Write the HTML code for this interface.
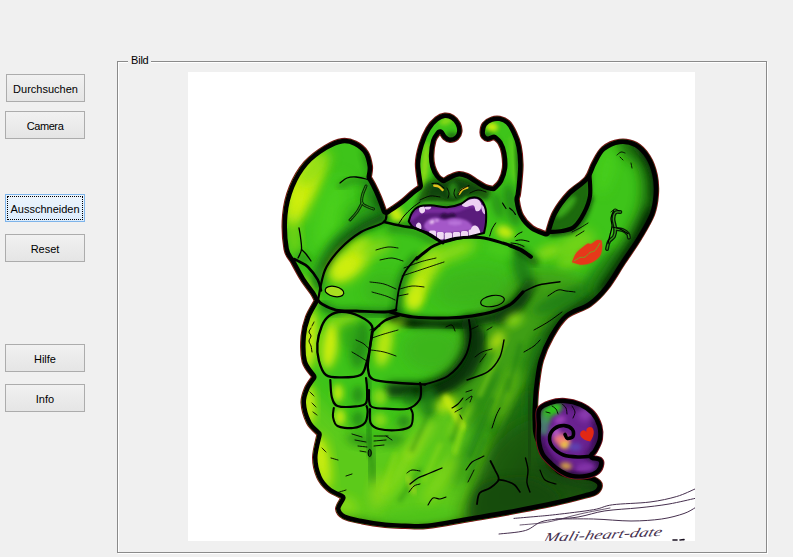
<!DOCTYPE html>
<html><head><meta charset="utf-8">
<style>
html,body{margin:0;padding:0;}
body{width:793px;height:557px;background:#f0f0f0;position:relative;overflow:hidden;font-family:"Liberation Sans",sans-serif;font-size:11px;color:#000;}
.btn{position:absolute;box-sizing:border-box;border:1px solid #acacac;background:linear-gradient(#f1f1f1,#e5e5e5);text-align:center;line-height:26px;padding-top:1px;height:28px;font-size:11px;}
.btn.focus{border-color:#7eb4ea;background:linear-gradient(#ecf4fc,#dcecfc);}
.btn.focus::after{content:"";position:absolute;left:1px;top:1px;right:1px;bottom:1px;border:1px dotted #000;}
.gb{position:absolute;left:117px;top:61px;width:648px;height:490px;border:1px solid #8a8a8a;box-shadow:1px 1px 0 #fff, inset 1px 1px 0 #fff;}
.gbl{position:absolute;left:128px;top:54px;padding:0 2px 0 3px;letter-spacing:-0.2px;background:#f0f0f0;line-height:13px;}
.pic{position:absolute;left:188px;top:72px;width:507px;height:469px;background:#fff;}
svg{position:absolute;left:0;top:0;}
</style></head><body>
<div class="btn" style="left:6px;top:74px;width:79px;">Durchsuchen</div>
<div class="btn" style="left:5px;top:111px;width:80px;letter-spacing:-0.4px;">Camera</div>
<div class="btn focus" style="left:5px;top:194px;width:80px;">Ausschneiden</div>
<div class="btn" style="left:5px;top:234px;width:80px;">Reset</div>
<div class="btn" style="left:5px;top:344px;width:80px;">Hilfe</div>
<div class="btn" style="left:5px;top:384px;width:80px;">Info</div>
<div class="gb"></div>
<div class="gbl">Bild</div>
<div class="pic"></div>
<svg width="793" height="557" viewBox="0 0 793 557">
<defs>
<clipPath id="bodyclip"><path d="M284.4,249.0 C283.0,241.0 282.1,225.5 283.0,215.0 C283.9,204.5 286.4,194.8 290.0,186.0 C293.6,177.2 298.7,168.7 304.5,162.0 C310.3,155.3 318.4,149.8 324.6,146.0 C330.9,142.2 336.8,139.7 342.0,139.0 C347.2,138.3 351.7,139.6 356.0,141.7 C360.3,143.8 365.0,147.6 367.7,151.7 C370.4,155.8 371.4,161.8 372.0,166.0 C372.6,170.2 371.2,175.2 371.0,177.0 C371.7,178.2 373.3,180.7 375.0,184.0 C376.7,187.3 379.2,192.6 381.0,197.0 C382.8,201.4 385.2,208.2 386.0,210.5 C387.2,209.8 390.3,207.8 393.0,206.0 C395.7,204.2 399.0,201.9 402.0,199.5 C405.0,197.1 408.2,193.8 411.0,191.5 C413.8,189.2 417.2,186.9 418.5,186.0 C418.1,182.3 415.7,170.9 415.8,164.0 C415.9,157.1 417.6,150.5 419.4,144.5 C421.2,138.5 423.8,132.5 426.5,128.0 C429.2,123.5 432.5,120.0 435.5,117.6 C438.5,115.2 441.5,113.9 444.5,113.6 C447.5,113.3 450.9,114.2 453.5,115.8 C456.1,117.4 458.5,120.3 459.8,123.0 C461.1,125.7 461.8,129.3 461.5,132.0 C461.2,134.7 459.9,137.3 458.0,139.0 C456.1,140.7 452.3,142.0 449.9,142.0 C447.5,142.0 445.2,140.4 443.6,139.0 C442.0,137.6 440.6,134.6 440.0,133.7 C439.2,134.9 436.6,137.4 435.5,141.0 C434.4,144.6 433.5,150.8 433.4,155.0 C433.2,159.2 433.7,162.7 434.6,166.0 C435.5,169.3 437.5,172.9 439.0,175.0 C440.5,177.1 442.8,178.0 443.6,178.6 C444.7,178.0 447.3,176.1 449.9,175.0 C452.4,173.9 455.9,172.2 458.9,172.0 C461.9,171.8 464.8,172.8 467.8,174.0 C470.8,175.2 473.8,177.7 476.8,179.5 C479.8,181.3 483.1,183.7 485.8,184.9 C488.5,186.1 491.8,186.4 493.0,186.7 C494.0,185.6 497.4,183.2 499.0,180.0 C500.6,176.8 502.3,172.2 502.8,167.8 C503.3,163.4 502.7,157.5 502.0,153.5 C501.3,149.5 499.8,146.0 498.4,143.6 C497.0,141.2 494.6,139.8 493.9,139.0 C492.8,139.3 489.6,141.2 487.6,141.0 C485.7,140.8 483.4,139.5 482.2,138.0 C481.0,136.5 480.3,134.5 480.4,132.0 C480.5,129.5 481.2,125.4 483.0,123.0 C484.8,120.6 488.2,118.6 491.0,117.6 C493.8,116.5 497.0,116.1 500.0,116.7 C503.0,117.3 506.3,118.5 509.0,121.0 C511.7,123.5 514.0,127.8 516.0,132.0 C518.0,136.2 519.7,140.7 520.8,146.0 C521.9,151.3 522.5,158.3 522.6,164.0 C522.8,169.7 522.1,174.9 521.7,180.0 C521.3,185.1 520.5,191.4 520.0,194.8 C519.5,198.2 518.5,197.2 519.0,200.6 C519.5,204.0 520.7,210.7 523.0,215.0 C525.3,219.3 529.2,223.6 533.0,226.4 C536.8,229.2 543.8,231.1 546.0,232.0 C547.2,228.7 549.4,218.7 553.0,212.0 C556.6,205.3 562.4,197.7 567.7,192.0 C573.0,186.3 581.0,182.4 585.0,177.6 C589.0,172.8 589.2,168.0 592.0,163.0 C594.8,158.0 597.4,151.3 602.0,147.4 C606.6,143.5 613.6,140.4 619.4,139.7 C625.2,139.0 631.7,140.3 636.7,143.0 C641.7,145.7 646.2,150.7 649.6,156.0 C653.0,161.3 655.4,168.2 656.8,174.7 C658.2,181.2 658.5,188.1 658.0,194.8 C657.5,201.5 656.8,207.6 654.0,215.0 C651.2,222.4 645.8,231.0 641.0,239.0 C636.2,247.0 630.5,254.7 625.0,263.0 C619.5,271.3 613.7,281.8 608.0,289.0 C602.3,296.2 597.4,301.2 590.7,306.0 C584.0,310.8 574.0,312.3 567.7,317.6 C561.4,322.9 557.1,330.5 553.0,337.7 C548.9,344.9 545.3,353.0 543.0,360.7 C540.7,368.4 539.9,377.1 539.0,383.7 C538.1,390.2 537.8,393.9 537.5,400.0 C537.2,406.1 536.6,413.3 537.0,420.0 C537.4,426.7 536.2,431.7 540.0,440.0 C543.8,448.3 551.7,464.0 560.0,470.0 C568.3,476.0 583.3,474.2 590.0,476.0 C596.7,477.8 598.1,479.0 600.0,481.0 C601.9,483.0 602.2,485.8 601.5,488.0 C600.8,490.2 598.8,492.9 596.0,494.5 C593.2,496.1 591.7,496.1 585.0,497.8 C578.3,499.6 568.0,502.4 556.0,505.0 C544.0,507.6 527.3,510.9 513.0,513.6 C498.7,516.3 484.2,518.6 470.0,521.0 C455.8,523.4 438.8,526.8 428.0,528.0 C417.2,529.2 412.2,528.2 405.0,528.0 C397.8,527.8 392.2,527.8 385.0,527.0 C377.8,526.2 369.0,524.9 362.0,523.5 C355.0,522.1 347.3,520.9 343.0,518.5 C338.7,516.1 336.3,512.4 336.0,509.0 C335.7,505.6 340.2,499.8 341.0,498.0 C338.7,496.8 331.3,494.0 327.4,490.6 C323.4,487.2 319.7,483.2 317.3,477.7 C314.9,472.2 313.0,464.8 313.0,457.6 C313.0,450.4 316.6,438.4 317.3,434.6 C315.6,432.7 309.6,428.3 307.0,423.0 C304.4,417.7 301.8,408.8 301.5,403.0 C301.2,397.2 303.2,392.3 305.0,388.0 C306.8,383.7 310.8,378.8 312.0,377.0 C310.4,374.5 304.4,368.8 302.6,362.0 C300.9,355.2 300.9,343.6 301.5,336.0 C302.1,328.4 303.8,322.5 306.0,316.6 C308.2,310.7 313.1,303.2 314.5,300.5 C313.9,299.4 313.2,297.4 311.0,294.0 C308.8,290.6 304.2,285.2 301.0,280.0 C297.8,274.8 294.3,268.2 291.5,263.0 C288.7,257.8 285.8,257.0 284.4,249.0Z"/></clipPath>
<clipPath id="picclip"><rect x="188" y="72" width="507" height="469"/></clipPath>
<filter id="b1" x="-50%" y="-50%" width="200%" height="200%"><feGaussianBlur stdDeviation="1"/></filter>
<filter id="b2" x="-50%" y="-50%" width="200%" height="200%"><feGaussianBlur stdDeviation="2"/></filter>
<filter id="b3" x="-50%" y="-50%" width="200%" height="200%"><feGaussianBlur stdDeviation="3"/></filter>
<filter id="b4" x="-50%" y="-50%" width="200%" height="200%"><feGaussianBlur stdDeviation="4"/></filter>
<filter id="b6" x="-50%" y="-50%" width="200%" height="200%"><feGaussianBlur stdDeviation="6"/></filter>
<filter id="b8" x="-50%" y="-50%" width="200%" height="200%"><feGaussianBlur stdDeviation="8"/></filter>
<filter id="b12" x="-50%" y="-50%" width="200%" height="200%"><feGaussianBlur stdDeviation="12"/></filter>
</defs>
<g clip-path="url(#picclip)">
<path d="M284.4,249.0 C283.0,241.0 282.1,225.5 283.0,215.0 C283.9,204.5 286.4,194.8 290.0,186.0 C293.6,177.2 298.7,168.7 304.5,162.0 C310.3,155.3 318.4,149.8 324.6,146.0 C330.9,142.2 336.8,139.7 342.0,139.0 C347.2,138.3 351.7,139.6 356.0,141.7 C360.3,143.8 365.0,147.6 367.7,151.7 C370.4,155.8 371.4,161.8 372.0,166.0 C372.6,170.2 371.2,175.2 371.0,177.0 C371.7,178.2 373.3,180.7 375.0,184.0 C376.7,187.3 379.2,192.6 381.0,197.0 C382.8,201.4 385.2,208.2 386.0,210.5 C387.2,209.8 390.3,207.8 393.0,206.0 C395.7,204.2 399.0,201.9 402.0,199.5 C405.0,197.1 408.2,193.8 411.0,191.5 C413.8,189.2 417.2,186.9 418.5,186.0 C418.1,182.3 415.7,170.9 415.8,164.0 C415.9,157.1 417.6,150.5 419.4,144.5 C421.2,138.5 423.8,132.5 426.5,128.0 C429.2,123.5 432.5,120.0 435.5,117.6 C438.5,115.2 441.5,113.9 444.5,113.6 C447.5,113.3 450.9,114.2 453.5,115.8 C456.1,117.4 458.5,120.3 459.8,123.0 C461.1,125.7 461.8,129.3 461.5,132.0 C461.2,134.7 459.9,137.3 458.0,139.0 C456.1,140.7 452.3,142.0 449.9,142.0 C447.5,142.0 445.2,140.4 443.6,139.0 C442.0,137.6 440.6,134.6 440.0,133.7 C439.2,134.9 436.6,137.4 435.5,141.0 C434.4,144.6 433.5,150.8 433.4,155.0 C433.2,159.2 433.7,162.7 434.6,166.0 C435.5,169.3 437.5,172.9 439.0,175.0 C440.5,177.1 442.8,178.0 443.6,178.6 C444.7,178.0 447.3,176.1 449.9,175.0 C452.4,173.9 455.9,172.2 458.9,172.0 C461.9,171.8 464.8,172.8 467.8,174.0 C470.8,175.2 473.8,177.7 476.8,179.5 C479.8,181.3 483.1,183.7 485.8,184.9 C488.5,186.1 491.8,186.4 493.0,186.7 C494.0,185.6 497.4,183.2 499.0,180.0 C500.6,176.8 502.3,172.2 502.8,167.8 C503.3,163.4 502.7,157.5 502.0,153.5 C501.3,149.5 499.8,146.0 498.4,143.6 C497.0,141.2 494.6,139.8 493.9,139.0 C492.8,139.3 489.6,141.2 487.6,141.0 C485.7,140.8 483.4,139.5 482.2,138.0 C481.0,136.5 480.3,134.5 480.4,132.0 C480.5,129.5 481.2,125.4 483.0,123.0 C484.8,120.6 488.2,118.6 491.0,117.6 C493.8,116.5 497.0,116.1 500.0,116.7 C503.0,117.3 506.3,118.5 509.0,121.0 C511.7,123.5 514.0,127.8 516.0,132.0 C518.0,136.2 519.7,140.7 520.8,146.0 C521.9,151.3 522.5,158.3 522.6,164.0 C522.8,169.7 522.1,174.9 521.7,180.0 C521.3,185.1 520.5,191.4 520.0,194.8 C519.5,198.2 518.5,197.2 519.0,200.6 C519.5,204.0 520.7,210.7 523.0,215.0 C525.3,219.3 529.2,223.6 533.0,226.4 C536.8,229.2 543.8,231.1 546.0,232.0 C547.2,228.7 549.4,218.7 553.0,212.0 C556.6,205.3 562.4,197.7 567.7,192.0 C573.0,186.3 581.0,182.4 585.0,177.6 C589.0,172.8 589.2,168.0 592.0,163.0 C594.8,158.0 597.4,151.3 602.0,147.4 C606.6,143.5 613.6,140.4 619.4,139.7 C625.2,139.0 631.7,140.3 636.7,143.0 C641.7,145.7 646.2,150.7 649.6,156.0 C653.0,161.3 655.4,168.2 656.8,174.7 C658.2,181.2 658.5,188.1 658.0,194.8 C657.5,201.5 656.8,207.6 654.0,215.0 C651.2,222.4 645.8,231.0 641.0,239.0 C636.2,247.0 630.5,254.7 625.0,263.0 C619.5,271.3 613.7,281.8 608.0,289.0 C602.3,296.2 597.4,301.2 590.7,306.0 C584.0,310.8 574.0,312.3 567.7,317.6 C561.4,322.9 557.1,330.5 553.0,337.7 C548.9,344.9 545.3,353.0 543.0,360.7 C540.7,368.4 539.9,377.1 539.0,383.7 C538.1,390.2 537.8,393.9 537.5,400.0 C537.2,406.1 536.6,413.3 537.0,420.0 C537.4,426.7 536.2,431.7 540.0,440.0 C543.8,448.3 551.7,464.0 560.0,470.0 C568.3,476.0 583.3,474.2 590.0,476.0 C596.7,477.8 598.1,479.0 600.0,481.0 C601.9,483.0 602.2,485.8 601.5,488.0 C600.8,490.2 598.8,492.9 596.0,494.5 C593.2,496.1 591.7,496.1 585.0,497.8 C578.3,499.6 568.0,502.4 556.0,505.0 C544.0,507.6 527.3,510.9 513.0,513.6 C498.7,516.3 484.2,518.6 470.0,521.0 C455.8,523.4 438.8,526.8 428.0,528.0 C417.2,529.2 412.2,528.2 405.0,528.0 C397.8,527.8 392.2,527.8 385.0,527.0 C377.8,526.2 369.0,524.9 362.0,523.5 C355.0,522.1 347.3,520.9 343.0,518.5 C338.7,516.1 336.3,512.4 336.0,509.0 C335.7,505.6 340.2,499.8 341.0,498.0 C338.7,496.8 331.3,494.0 327.4,490.6 C323.4,487.2 319.7,483.2 317.3,477.7 C314.9,472.2 313.0,464.8 313.0,457.6 C313.0,450.4 316.6,438.4 317.3,434.6 C315.6,432.7 309.6,428.3 307.0,423.0 C304.4,417.7 301.8,408.8 301.5,403.0 C301.2,397.2 303.2,392.3 305.0,388.0 C306.8,383.7 310.8,378.8 312.0,377.0 C310.4,374.5 304.4,368.8 302.6,362.0 C300.9,355.2 300.9,343.6 301.5,336.0 C302.1,328.4 303.8,322.5 306.0,316.6 C308.2,310.7 313.1,303.2 314.5,300.5 C313.9,299.4 313.2,297.4 311.0,294.0 C308.8,290.6 304.2,285.2 301.0,280.0 C297.8,274.8 294.3,268.2 291.5,263.0 C288.7,257.8 285.8,257.0 284.4,249.0Z" fill="none" stroke="#7a1515" stroke-width="2"/>
<g clip-path="url(#bodyclip)">
<path d="M284.4,249.0 C283.0,241.0 282.1,225.5 283.0,215.0 C283.9,204.5 286.4,194.8 290.0,186.0 C293.6,177.2 298.7,168.7 304.5,162.0 C310.3,155.3 318.4,149.8 324.6,146.0 C330.9,142.2 336.8,139.7 342.0,139.0 C347.2,138.3 351.7,139.6 356.0,141.7 C360.3,143.8 365.0,147.6 367.7,151.7 C370.4,155.8 371.4,161.8 372.0,166.0 C372.6,170.2 371.2,175.2 371.0,177.0 C371.7,178.2 373.3,180.7 375.0,184.0 C376.7,187.3 379.2,192.6 381.0,197.0 C382.8,201.4 385.2,208.2 386.0,210.5 C387.2,209.8 390.3,207.8 393.0,206.0 C395.7,204.2 399.0,201.9 402.0,199.5 C405.0,197.1 408.2,193.8 411.0,191.5 C413.8,189.2 417.2,186.9 418.5,186.0 C418.1,182.3 415.7,170.9 415.8,164.0 C415.9,157.1 417.6,150.5 419.4,144.5 C421.2,138.5 423.8,132.5 426.5,128.0 C429.2,123.5 432.5,120.0 435.5,117.6 C438.5,115.2 441.5,113.9 444.5,113.6 C447.5,113.3 450.9,114.2 453.5,115.8 C456.1,117.4 458.5,120.3 459.8,123.0 C461.1,125.7 461.8,129.3 461.5,132.0 C461.2,134.7 459.9,137.3 458.0,139.0 C456.1,140.7 452.3,142.0 449.9,142.0 C447.5,142.0 445.2,140.4 443.6,139.0 C442.0,137.6 440.6,134.6 440.0,133.7 C439.2,134.9 436.6,137.4 435.5,141.0 C434.4,144.6 433.5,150.8 433.4,155.0 C433.2,159.2 433.7,162.7 434.6,166.0 C435.5,169.3 437.5,172.9 439.0,175.0 C440.5,177.1 442.8,178.0 443.6,178.6 C444.7,178.0 447.3,176.1 449.9,175.0 C452.4,173.9 455.9,172.2 458.9,172.0 C461.9,171.8 464.8,172.8 467.8,174.0 C470.8,175.2 473.8,177.7 476.8,179.5 C479.8,181.3 483.1,183.7 485.8,184.9 C488.5,186.1 491.8,186.4 493.0,186.7 C494.0,185.6 497.4,183.2 499.0,180.0 C500.6,176.8 502.3,172.2 502.8,167.8 C503.3,163.4 502.7,157.5 502.0,153.5 C501.3,149.5 499.8,146.0 498.4,143.6 C497.0,141.2 494.6,139.8 493.9,139.0 C492.8,139.3 489.6,141.2 487.6,141.0 C485.7,140.8 483.4,139.5 482.2,138.0 C481.0,136.5 480.3,134.5 480.4,132.0 C480.5,129.5 481.2,125.4 483.0,123.0 C484.8,120.6 488.2,118.6 491.0,117.6 C493.8,116.5 497.0,116.1 500.0,116.7 C503.0,117.3 506.3,118.5 509.0,121.0 C511.7,123.5 514.0,127.8 516.0,132.0 C518.0,136.2 519.7,140.7 520.8,146.0 C521.9,151.3 522.5,158.3 522.6,164.0 C522.8,169.7 522.1,174.9 521.7,180.0 C521.3,185.1 520.5,191.4 520.0,194.8 C519.5,198.2 518.5,197.2 519.0,200.6 C519.5,204.0 520.7,210.7 523.0,215.0 C525.3,219.3 529.2,223.6 533.0,226.4 C536.8,229.2 543.8,231.1 546.0,232.0 C547.2,228.7 549.4,218.7 553.0,212.0 C556.6,205.3 562.4,197.7 567.7,192.0 C573.0,186.3 581.0,182.4 585.0,177.6 C589.0,172.8 589.2,168.0 592.0,163.0 C594.8,158.0 597.4,151.3 602.0,147.4 C606.6,143.5 613.6,140.4 619.4,139.7 C625.2,139.0 631.7,140.3 636.7,143.0 C641.7,145.7 646.2,150.7 649.6,156.0 C653.0,161.3 655.4,168.2 656.8,174.7 C658.2,181.2 658.5,188.1 658.0,194.8 C657.5,201.5 656.8,207.6 654.0,215.0 C651.2,222.4 645.8,231.0 641.0,239.0 C636.2,247.0 630.5,254.7 625.0,263.0 C619.5,271.3 613.7,281.8 608.0,289.0 C602.3,296.2 597.4,301.2 590.7,306.0 C584.0,310.8 574.0,312.3 567.7,317.6 C561.4,322.9 557.1,330.5 553.0,337.7 C548.9,344.9 545.3,353.0 543.0,360.7 C540.7,368.4 539.9,377.1 539.0,383.7 C538.1,390.2 537.8,393.9 537.5,400.0 C537.2,406.1 536.6,413.3 537.0,420.0 C537.4,426.7 536.2,431.7 540.0,440.0 C543.8,448.3 551.7,464.0 560.0,470.0 C568.3,476.0 583.3,474.2 590.0,476.0 C596.7,477.8 598.1,479.0 600.0,481.0 C601.9,483.0 602.2,485.8 601.5,488.0 C600.8,490.2 598.8,492.9 596.0,494.5 C593.2,496.1 591.7,496.1 585.0,497.8 C578.3,499.6 568.0,502.4 556.0,505.0 C544.0,507.6 527.3,510.9 513.0,513.6 C498.7,516.3 484.2,518.6 470.0,521.0 C455.8,523.4 438.8,526.8 428.0,528.0 C417.2,529.2 412.2,528.2 405.0,528.0 C397.8,527.8 392.2,527.8 385.0,527.0 C377.8,526.2 369.0,524.9 362.0,523.5 C355.0,522.1 347.3,520.9 343.0,518.5 C338.7,516.1 336.3,512.4 336.0,509.0 C335.7,505.6 340.2,499.8 341.0,498.0 C338.7,496.8 331.3,494.0 327.4,490.6 C323.4,487.2 319.7,483.2 317.3,477.7 C314.9,472.2 313.0,464.8 313.0,457.6 C313.0,450.4 316.6,438.4 317.3,434.6 C315.6,432.7 309.6,428.3 307.0,423.0 C304.4,417.7 301.8,408.8 301.5,403.0 C301.2,397.2 303.2,392.3 305.0,388.0 C306.8,383.7 310.8,378.8 312.0,377.0 C310.4,374.5 304.4,368.8 302.6,362.0 C300.9,355.2 300.9,343.6 301.5,336.0 C302.1,328.4 303.8,322.5 306.0,316.6 C308.2,310.7 313.1,303.2 314.5,300.5 C313.9,299.4 313.2,297.4 311.0,294.0 C308.8,290.6 304.2,285.2 301.0,280.0 C297.8,274.8 294.3,268.2 291.5,263.0 C288.7,257.8 285.8,257.0 284.4,249.0Z" fill="#3ec41a"/>
<path d="M470.0,320.0 C486.7,298.3 508.3,275.0 530.0,270.0 C551.7,265.0 595.0,280.0 600.0,290.0 C605.0,300.0 569.2,315.0 560.0,330.0 C550.8,345.0 547.5,356.7 545.0,380.0 C542.5,403.3 535.8,451.3 545.0,470.0 C554.2,488.7 612.5,482.8 600.0,492.0 C587.5,501.2 496.7,528.7 470.0,525.0 C443.3,521.3 446.7,490.8 440.0,470.0 C433.3,449.2 425.0,425.0 430.0,400.0 C435.0,375.0 453.3,341.7 470.0,320.0Z" fill="#3f9e18" filter="url(#b8)" opacity="0.95"/>
<path d="M300.0,385.0 C310.8,380.0 348.3,437.5 370.0,440.0 C391.7,442.5 413.3,403.3 430.0,400.0 C446.7,396.7 458.3,408.3 470.0,420.0 C481.7,431.7 498.3,451.7 500.0,470.0 C501.7,488.3 508.3,520.0 480.0,530.0 C451.7,540.0 359.2,540.0 330.0,530.0 C300.8,520.0 310.0,494.2 305.0,470.0 C300.0,445.8 289.2,390.0 300.0,385.0Z" fill="#62cc1c" filter="url(#b8)" opacity="0.85"/>
<path d="M515.0,400.0 C525.0,387.5 539.5,383.3 545.0,395.0 C550.5,406.7 538.0,455.0 548.0,470.0 C558.0,485.0 603.0,478.0 605.0,485.0 C607.0,492.0 579.2,505.8 560.0,512.0 C540.8,518.2 502.5,529.0 490.0,522.0 C477.5,515.0 480.8,490.3 485.0,470.0 C489.2,449.7 505.0,412.5 515.0,400.0Z" fill="#1d6211" filter="url(#b8)" opacity="0.95"/>
<path d="M530.0,450.0 C545.8,446.0 588.0,468.5 600.0,476.0 C612.0,483.5 612.0,489.0 602.0,495.0 C592.0,501.0 556.2,511.2 540.0,512.0 C523.8,512.8 506.7,510.3 505.0,500.0 C503.3,489.7 514.2,454.0 530.0,450.0Z" fill="#143f0c" filter="url(#b4)" opacity="0.95"/>
<path d="M538.0,458.0 C546.3,456.7 564.7,477.7 575.0,482.0 C585.3,486.3 597.5,481.7 600.0,484.0 C602.5,486.3 599.2,492.5 590.0,496.0 C580.8,499.5 555.8,506.0 545.0,505.0 C534.2,504.0 526.2,497.8 525.0,490.0 C523.8,482.2 529.7,459.3 538.0,458.0Z" fill="#0f300a" filter="url(#b3)" opacity="0.9"/>
<path d="M600.0,300.0 C594.7,303.0 575.8,311.7 568.0,318.0 C560.2,324.3 557.2,330.8 553.0,338.0 C548.8,345.2 545.3,353.3 543.0,361.0 C540.7,368.7 539.9,375.8 539.0,384.0 C538.1,392.2 537.7,399.0 537.5,410.0 C537.3,421.0 537.9,443.3 538.0,450.0" fill="none" stroke="#195a10" stroke-width="26" stroke-linecap="round" stroke-linejoin="round" filter="url(#b6)" opacity="0.9"/>
<path d="M612.0,285.0 C604.7,290.5 577.8,309.2 568.0,318.0 C558.2,326.8 557.2,330.8 553.0,338.0 C548.8,345.2 545.3,353.3 543.0,361.0 C540.7,368.7 539.9,375.8 539.0,384.0 C538.1,392.2 537.8,405.7 537.5,410.0" fill="none" stroke="#0b3c09" stroke-width="10" stroke-linecap="round" stroke-linejoin="round" filter="url(#b4)" opacity="0.8"/>
<path d="M345.0,522.0 C351.7,523.2 371.2,527.8 385.0,529.0 C398.8,530.2 413.8,530.2 428.0,529.0 C442.2,527.8 455.8,524.5 470.0,522.0 C484.2,519.5 498.7,516.7 513.0,514.0 C527.3,511.3 543.2,508.8 556.0,506.0 C568.8,503.2 584.3,498.5 590.0,497.0" fill="none" stroke="#1a5a10" stroke-width="10" stroke-linecap="round" stroke-linejoin="round" filter="url(#b4)" opacity="0.8"/>
<ellipse cx="302.0" cy="190.0" rx="13.0" ry="36.0" transform="rotate(18.0 302.0 190.0)" fill="#cdee10" filter="url(#b6)" opacity="1"/>
<ellipse cx="310.0" cy="180.0" rx="10.0" ry="24.0" transform="rotate(25.0 310.0 180.0)" fill="#cdee10" filter="url(#b6)" opacity="0.7"/>
<ellipse cx="297.0" cy="198.0" rx="6.0" ry="26.0" transform="rotate(12.0 297.0 198.0)" fill="#cdee10" filter="url(#b4)" opacity="0.8"/>
<ellipse cx="294.0" cy="235.0" rx="6.0" ry="22.0" transform="rotate(-5.0 294.0 235.0)" fill="#93de18" filter="url(#b6)" opacity="0.7"/>
<ellipse cx="314.0" cy="168.0" rx="10.0" ry="22.0" transform="rotate(42.0 314.0 168.0)" fill="#93de18" filter="url(#b6)" opacity="0.9"/>
<ellipse cx="330.0" cy="215.0" rx="14.0" ry="40.0" transform="rotate(15.0 330.0 215.0)" fill="#4fd61c" filter="url(#b8)" opacity="0.7"/>
<ellipse cx="375.0" cy="198.0" rx="10.0" ry="24.0" transform="rotate(-10.0 375.0 198.0)" fill="#1f7d12" filter="url(#b6)" opacity="0.95"/>
<ellipse cx="381.0" cy="205.0" rx="5.0" ry="12.0" transform="rotate(-15.0 381.0 205.0)" fill="#0b3c09" filter="url(#b3)" opacity="0.6"/>
<ellipse cx="360.0" cy="215.0" rx="16.0" ry="10.0" transform="rotate(-30.0 360.0 215.0)" fill="#2a9816" filter="url(#b6)" opacity="0.7"/>
<path d="M384.0,214.0 C380.3,215.7 369.3,219.5 362.0,224.0 C354.7,228.5 346.2,234.7 340.0,241.0 C333.8,247.3 329.0,254.7 325.0,262.0 C321.0,269.3 317.5,281.2 316.0,285.0" fill="none" stroke="#1f7d12" stroke-width="14" stroke-linecap="round" stroke-linejoin="round" filter="url(#b4)" opacity="0.95"/>
<path d="M384.0,217.0 C380.3,218.8 369.2,223.3 362.0,228.0 C354.8,232.7 346.8,238.7 341.0,245.0 C335.2,251.3 329.3,262.5 327.0,266.0" fill="none" stroke="#0b3c09" stroke-width="6" stroke-linecap="round" stroke-linejoin="round" filter="url(#b3)" opacity="0.8"/>
<ellipse cx="303.0" cy="258.0" rx="8.0" ry="5.0" transform="rotate(30.0 303.0 258.0)" fill="#1f7d12" filter="url(#b3)" opacity="0.6"/>
<path d="M340.0,186.0 C342.7,185.0 350.8,180.3 356.0,180.0 C361.2,179.7 368.5,183.3 371.0,184.0" fill="none" stroke="#1f7d12" stroke-width="6" stroke-linecap="round" stroke-linejoin="round" filter="url(#b3)" opacity="0.6"/>
<ellipse cx="368.0" cy="160.0" rx="5.0" ry="14.0" transform="rotate(-15.0 368.0 160.0)" fill="#1f7d12" filter="url(#b3)" opacity="0.6"/>
<ellipse cx="425.0" cy="165.0" rx="3.5" ry="24.0" transform="rotate(5.0 425.0 165.0)" fill="#93de18" filter="url(#b2)" opacity="0.95"/>
<ellipse cx="446.0" cy="121.0" rx="7.0" ry="3.5" transform="rotate(-20.0 446.0 121.0)" fill="#93de18" filter="url(#b2)" opacity="0.9"/>
<ellipse cx="513.0" cy="160.0" rx="3.5" ry="24.0" transform="rotate(-5.0 513.0 160.0)" fill="#5fd01c" filter="url(#b2)" opacity="0.8"/>
<ellipse cx="492.0" cy="127.0" rx="6.0" ry="4.5" transform="rotate(10.0 492.0 127.0)" fill="#cdee10" filter="url(#b2)" opacity="0.95"/>
<ellipse cx="519.0" cy="165.0" rx="2.5" ry="30.0" transform="rotate(-3.0 519.0 165.0)" fill="#0b3c09" filter="url(#b2)" opacity="0.7"/>
<ellipse cx="437.0" cy="160.0" rx="3.0" ry="22.0" transform="rotate(3.0 437.0 160.0)" fill="#17560e" filter="url(#b2)" opacity="0.8"/>
<ellipse cx="499.0" cy="160.0" rx="3.0" ry="22.0" transform="rotate(-3.0 499.0 160.0)" fill="#17560e" filter="url(#b2)" opacity="0.8"/>
<ellipse cx="452.0" cy="136.0" rx="6.0" ry="4.0" transform="rotate(0.0 452.0 136.0)" fill="#17560e" filter="url(#b2)" opacity="0.7"/>
<ellipse cx="487.0" cy="136.0" rx="6.0" ry="4.0" transform="rotate(0.0 487.0 136.0)" fill="#17560e" filter="url(#b2)" opacity="0.6"/>
<ellipse cx="455.0" cy="188.0" rx="32.0" ry="10.0" transform="rotate(0.0 455.0 188.0)" fill="#1a6a10" filter="url(#b4)" opacity="0.95"/>
<ellipse cx="396.0" cy="214.0" rx="6.0" ry="10.0" transform="rotate(-35.0 396.0 214.0)" fill="#cdee10" filter="url(#b3)" opacity="1"/>
<ellipse cx="505.0" cy="232.0" rx="9.0" ry="6.0" transform="rotate(20.0 505.0 232.0)" fill="#cdee10" filter="url(#b3)" opacity="0.95"/>
<ellipse cx="512.0" cy="205.0" rx="7.0" ry="22.0" transform="rotate(-15.0 512.0 205.0)" fill="#1f7d12" filter="url(#b4)" opacity="0.8"/>
<ellipse cx="404.0" cy="224.0" rx="14.0" ry="3.0" transform="rotate(-5.0 404.0 224.0)" fill="#1f7d12" filter="url(#b2)" opacity="0.6"/>
<ellipse cx="497.0" cy="205.0" rx="5.0" ry="14.0" transform="rotate(-15.0 497.0 205.0)" fill="#1f7d12" filter="url(#b3)" opacity="0.6"/>
<ellipse cx="349.0" cy="264.0" rx="24.0" ry="13.0" transform="rotate(-40.0 349.0 264.0)" fill="#cdee10" filter="url(#b6)" opacity="1"/>
<ellipse cx="345.0" cy="268.0" rx="14.0" ry="7.0" transform="rotate(-40.0 345.0 268.0)" fill="#cdee10" filter="url(#b4)" opacity="0.8"/>
<ellipse cx="360.0" cy="245.0" rx="12.0" ry="5.0" transform="rotate(-30.0 360.0 245.0)" fill="#cdee10" filter="url(#b4)" opacity="0.7"/>
<ellipse cx="306.0" cy="284.0" rx="5.0" ry="10.0" transform="rotate(-35.0 306.0 284.0)" fill="#93de18" filter="url(#b3)" opacity="0.8"/>
<ellipse cx="374.0" cy="248.0" rx="18.0" ry="8.0" transform="rotate(-20.0 374.0 248.0)" fill="#93de18" filter="url(#b6)" opacity="0.8"/>
<ellipse cx="385.0" cy="290.0" rx="20.0" ry="16.0" transform="rotate(0.0 385.0 290.0)" fill="#3ab01a" filter="url(#b6)" opacity="0.7"/>
<path d="M322.0,305.0 C324.3,306.2 330.3,310.8 336.0,312.0 C341.7,313.2 347.8,311.8 356.0,312.0 C364.2,312.2 378.3,313.2 385.0,313.0 C391.7,312.8 394.2,311.3 396.0,311.0" fill="none" stroke="#1f7d12" stroke-width="9" stroke-linecap="round" stroke-linejoin="round" filter="url(#b3)" opacity="0.85"/>
<path d="M416.0,259.0 C414.2,261.3 407.7,267.8 405.0,273.0 C402.3,278.2 401.3,283.8 400.0,290.0 C398.7,296.2 397.5,306.7 397.0,310.0" fill="none" stroke="#1f7d12" stroke-width="10" stroke-linecap="round" stroke-linejoin="round" filter="url(#b3)" opacity="0.85"/>
<path d="M390.0,229.0 C394.0,229.5 406.3,229.7 414.0,232.0 C421.7,234.3 432.3,241.2 436.0,243.0" fill="none" stroke="#1f7d12" stroke-width="6" stroke-linecap="round" stroke-linejoin="round" filter="url(#b3)" opacity="0.7"/>
<ellipse cx="426.0" cy="272.0" rx="10.0" ry="26.0" transform="rotate(30.0 426.0 272.0)" fill="#cdee10" filter="url(#b6)" opacity="0.85"/>
<ellipse cx="418.0" cy="292.0" rx="7.0" ry="16.0" transform="rotate(18.0 418.0 292.0)" fill="#cdee10" filter="url(#b4)" opacity="0.9"/>
<ellipse cx="452.0" cy="252.0" rx="26.0" ry="8.0" transform="rotate(-22.0 452.0 252.0)" fill="#93de18" filter="url(#b6)" opacity="0.9"/>
<ellipse cx="414.0" cy="299.0" rx="8.0" ry="11.0" transform="rotate(15.0 414.0 299.0)" fill="#cdee10" filter="url(#b4)" opacity="1"/>
<ellipse cx="472.0" cy="288.0" rx="38.0" ry="20.0" transform="rotate(-10.0 472.0 288.0)" fill="#3cb41c" filter="url(#b8)" opacity="0.85"/>
<ellipse cx="522.0" cy="268.0" rx="9.0" ry="22.0" transform="rotate(-15.0 522.0 268.0)" fill="#1f7d12" filter="url(#b4)" opacity="0.9"/>
<ellipse cx="548.0" cy="252.0" rx="12.0" ry="7.0" transform="rotate(-20.0 548.0 252.0)" fill="#93de18" filter="url(#b4)" opacity="0.8"/>
<ellipse cx="500.0" cy="250.0" rx="16.0" ry="6.0" transform="rotate(15.0 500.0 250.0)" fill="#4fd01c" filter="url(#b4)" opacity="0.6"/>
<path d="M392.0,317.0 C395.5,317.8 403.7,320.8 413.0,322.0 C422.3,323.2 438.2,324.2 448.0,324.0 C457.8,323.8 464.0,322.3 472.0,321.0 C480.0,319.7 489.3,318.2 496.0,316.0 C502.7,313.8 507.3,311.5 512.0,308.0 C516.7,304.5 522.0,297.2 524.0,295.0" fill="none" stroke="#0b3c09" stroke-width="11" stroke-linecap="round" stroke-linejoin="round" filter="url(#b3)" opacity="0.95"/>
<path d="M394.0,320.0 C397.2,320.7 404.0,323.0 413.0,324.0 C422.0,325.0 438.5,326.0 448.0,326.0 C457.5,326.0 466.3,324.3 470.0,324.0" fill="none" stroke="#062405" stroke-width="7" stroke-linecap="round" stroke-linejoin="round" filter="url(#b2)" opacity="0.8"/>
<path d="M500.0,319.0 C502.7,317.0 511.0,312.7 516.0,307.0 C521.0,301.3 527.7,288.7 530.0,285.0" fill="none" stroke="#0b3c09" stroke-width="12" stroke-linecap="round" stroke-linejoin="round" filter="url(#b4)" opacity="0.8"/>
<path d="M518.0,250.0 C519.5,251.0 524.2,254.0 527.0,256.0 C529.8,258.0 533.7,261.0 535.0,262.0" fill="none" stroke="#0b3c09" stroke-width="7" stroke-linecap="round" stroke-linejoin="round" filter="url(#b3)" opacity="0.7"/>
<ellipse cx="330.0" cy="345.0" rx="8.0" ry="24.0" transform="rotate(8.0 330.0 345.0)" fill="#cdee10" filter="url(#b4)" opacity="1"/>
<ellipse cx="345.0" cy="321.0" rx="14.0" ry="6.0" transform="rotate(-15.0 345.0 321.0)" fill="#93de18" filter="url(#b4)" opacity="0.9"/>
<ellipse cx="360.0" cy="345.0" rx="9.0" ry="24.0" transform="rotate(8.0 360.0 345.0)" fill="#1f7d12" filter="url(#b4)" opacity="0.75"/>
<ellipse cx="350.0" cy="335.0" rx="10.0" ry="14.0" transform="rotate(0.0 350.0 335.0)" fill="#2fa018" filter="url(#b4)" opacity="0.6"/>
<ellipse cx="384.0" cy="345.0" rx="8.0" ry="22.0" transform="rotate(10.0 384.0 345.0)" fill="#cdee10" filter="url(#b4)" opacity="0.85"/>
<ellipse cx="395.0" cy="325.0" rx="12.0" ry="5.0" transform="rotate(-20.0 395.0 325.0)" fill="#93de18" filter="url(#b4)" opacity="0.8"/>
<ellipse cx="432.0" cy="350.0" rx="28.0" ry="22.0" transform="rotate(0.0 432.0 350.0)" fill="#3eb41c" filter="url(#b6)" opacity="0.85"/>
<path d="M469.0,324.0 C469.5,326.7 472.5,334.0 472.0,340.0 C471.5,346.0 469.7,353.5 466.0,360.0 C462.3,366.5 456.7,374.2 450.0,379.0 C443.3,383.8 435.7,387.2 426.0,389.0 C416.3,390.8 397.7,389.8 392.0,390.0" fill="none" stroke="#0b3c09" stroke-width="15" stroke-linecap="round" stroke-linejoin="round" filter="url(#b4)" opacity="1"/>
<path d="M474.0,330.0 C474.2,333.3 477.0,342.7 475.0,350.0 C473.0,357.3 468.5,367.3 462.0,374.0 C455.5,380.7 444.7,386.7 436.0,390.0 C427.3,393.3 414.3,393.3 410.0,394.0" fill="none" stroke="#062405" stroke-width="10" stroke-linecap="round" stroke-linejoin="round" filter="url(#b3)" opacity="0.9"/>
<path d="M480.0,335.0 C480.0,337.8 482.0,345.2 480.0,352.0 C478.0,358.8 470.0,372.0 468.0,376.0" fill="none" stroke="#0b3c09" stroke-width="8" stroke-linecap="round" stroke-linejoin="round" filter="url(#b3)" opacity="0.7"/>
<path d="M540.0,340.0 C536.7,345.8 526.7,363.3 520.0,375.0 C513.3,386.7 503.3,404.2 500.0,410.0" fill="none" stroke="#1f7d12" stroke-width="9" stroke-linecap="round" stroke-linejoin="round" filter="url(#b4)" opacity="0.6"/>
<path d="M478.0,330.0 C477.7,334.0 479.0,345.7 476.0,354.0 C473.0,362.3 467.7,373.0 460.0,380.0 C452.3,387.0 435.0,393.3 430.0,396.0" fill="none" stroke="#0b3c09" stroke-width="12" stroke-linecap="round" stroke-linejoin="round" filter="url(#b6)" opacity="0.7"/>
<ellipse cx="310.0" cy="340.0" rx="7.0" ry="30.0" transform="rotate(5.0 310.0 340.0)" fill="#cdee10" filter="url(#b4)" opacity="1"/>
<ellipse cx="309.0" cy="405.0" rx="6.0" ry="20.0" transform="rotate(0.0 309.0 405.0)" fill="#cdee10" filter="url(#b4)" opacity="1"/>
<ellipse cx="312.0" cy="300.0" rx="6.0" ry="10.0" transform="rotate(0.0 312.0 300.0)" fill="#93de18" filter="url(#b4)" opacity="0.7"/>
<ellipse cx="338.0" cy="393.0" rx="5.0" ry="9.0" transform="rotate(0.0 338.0 393.0)" fill="#cdee10" filter="url(#b3)" opacity="0.9"/>
<ellipse cx="358.0" cy="395.0" rx="6.0" ry="9.0" transform="rotate(0.0 358.0 395.0)" fill="#1f7d12" filter="url(#b3)" opacity="0.65"/>
<ellipse cx="380.0" cy="397.0" rx="7.0" ry="8.0" transform="rotate(0.0 380.0 397.0)" fill="#93de18" filter="url(#b3)" opacity="0.85"/>
<ellipse cx="410.0" cy="399.0" rx="8.0" ry="8.0" transform="rotate(0.0 410.0 399.0)" fill="#1f7d12" filter="url(#b3)" opacity="0.7"/>
<ellipse cx="340.0" cy="417.0" rx="5.0" ry="8.0" transform="rotate(0.0 340.0 417.0)" fill="#cdee10" filter="url(#b3)" opacity="0.9"/>
<ellipse cx="358.0" cy="419.0" rx="6.0" ry="8.0" transform="rotate(0.0 358.0 419.0)" fill="#1f7d12" filter="url(#b3)" opacity="0.65"/>
<ellipse cx="380.0" cy="420.0" rx="7.0" ry="7.0" transform="rotate(0.0 380.0 420.0)" fill="#93de18" filter="url(#b3)" opacity="0.85"/>
<ellipse cx="404.0" cy="422.0" rx="7.0" ry="7.0" transform="rotate(0.0 404.0 422.0)" fill="#1f7d12" filter="url(#b3)" opacity="0.7"/>
<path d="M368.0,380.0 C368.0,384.2 367.8,396.7 368.0,405.0 C368.2,413.3 368.7,421.7 369.0,430.0 C369.3,438.3 369.8,450.8 370.0,455.0" fill="none" stroke="#1f7d12" stroke-width="5" stroke-linecap="round" stroke-linejoin="round" filter="url(#b2)" opacity="0.7"/>
<ellipse cx="428.0" cy="402.0" rx="10.0" ry="16.0" transform="rotate(0.0 428.0 402.0)" fill="#1f7d12" filter="url(#b4)" opacity="0.8"/>
<path d="M370.0,450.0 C370.3,452.5 371.3,460.0 372.0,465.0 C372.7,470.0 373.7,477.5 374.0,480.0" fill="none" stroke="#1f7d12" stroke-width="8" stroke-linecap="round" stroke-linejoin="round" filter="url(#b4)" opacity="0.75"/>
<ellipse cx="360.0" cy="440.0" rx="14.0" ry="6.0" transform="rotate(10.0 360.0 440.0)" fill="#1f7d12" filter="url(#b4)" opacity="0.6"/>
<ellipse cx="392.0" cy="440.0" rx="14.0" ry="6.0" transform="rotate(-5.0 392.0 440.0)" fill="#1f7d12" filter="url(#b4)" opacity="0.6"/>
<ellipse cx="378.0" cy="492.0" rx="8.0" ry="18.0" transform="rotate(10.0 378.0 492.0)" fill="#a0dc1c" filter="url(#b6)" opacity="0.6"/>
<ellipse cx="514.0" cy="320.0" rx="10.0" ry="6.0" transform="rotate(-30.0 514.0 320.0)" fill="#93de18" filter="url(#b4)" opacity="0.9"/>
<ellipse cx="497.0" cy="341.0" rx="6.0" ry="11.0" transform="rotate(30.0 497.0 341.0)" fill="#cdee10" filter="url(#b4)" opacity="0.8"/>
<ellipse cx="446.0" cy="404.0" rx="11.0" ry="7.0" transform="rotate(-30.0 446.0 404.0)" fill="#cdee10" filter="url(#b4)" opacity="0.8"/>
<ellipse cx="462.0" cy="420.0" rx="6.0" ry="20.0" transform="rotate(35.0 462.0 420.0)" fill="#93de18" filter="url(#b4)" opacity="0.7"/>
<ellipse cx="505.0" cy="395.0" rx="7.0" ry="30.0" transform="rotate(25.0 505.0 395.0)" fill="#93de18" filter="url(#b6)" opacity="0.6"/>
<ellipse cx="560.0" cy="300.0" rx="30.0" ry="8.0" transform="rotate(-25.0 560.0 300.0)" fill="#1f7d12" filter="url(#b4)" opacity="0.8"/>
<ellipse cx="600.0" cy="272.0" rx="30.0" ry="8.0" transform="rotate(-50.0 600.0 272.0)" fill="#1f7d12" filter="url(#b4)" opacity="0.7"/>
<ellipse cx="483.0" cy="400.0" rx="5.0" ry="34.0" transform="rotate(28.0 483.0 400.0)" fill="#1f7d12" filter="url(#b4)" opacity="0.6"/>
<ellipse cx="470.0" cy="450.0" rx="8.0" ry="40.0" transform="rotate(25.0 470.0 450.0)" fill="#1f7d12" filter="url(#b6)" opacity="0.6"/>
<ellipse cx="520.0" cy="420.0" rx="6.0" ry="30.0" transform="rotate(20.0 520.0 420.0)" fill="#1f7d12" filter="url(#b4)" opacity="0.5"/>
<path d="M632.0,142.0 C634.7,144.3 644.2,150.5 648.0,156.0 C651.8,161.5 653.7,168.5 655.0,175.0 C656.3,181.5 656.5,188.3 656.0,195.0 C655.5,201.7 654.7,207.7 652.0,215.0 C649.3,222.3 644.5,231.0 640.0,239.0 C635.5,247.0 630.3,254.7 625.0,263.0 C619.7,271.3 610.8,284.7 608.0,289.0" fill="none" stroke="#1a6a10" stroke-width="30" stroke-linecap="round" stroke-linejoin="round" filter="url(#b6)" opacity="0.9"/>
<path d="M640.0,146.0 C641.8,148.3 648.2,154.7 651.0,160.0 C653.8,165.3 655.8,172.0 657.0,178.0 C658.2,184.0 658.5,189.7 658.0,196.0 C657.5,202.3 656.8,208.7 654.0,216.0 C651.2,223.3 645.8,232.0 641.0,240.0 C636.2,248.0 630.8,255.3 625.0,264.0 C619.2,272.7 609.2,287.3 606.0,292.0" fill="none" stroke="#0b3c09" stroke-width="14" stroke-linecap="round" stroke-linejoin="round" filter="url(#b4)" opacity="0.95"/>
<path d="M652.0,215.0 C650.0,219.5 644.3,233.8 640.0,242.0 C635.7,250.2 631.0,256.3 626.0,264.0 C621.0,271.7 612.7,284.0 610.0,288.0" fill="none" stroke="#062405" stroke-width="14" stroke-linecap="round" stroke-linejoin="round" filter="url(#b4)" opacity="0.85"/>
<path d="M645.0,150.0 C646.7,153.7 653.0,164.3 655.0,172.0 C657.0,179.7 656.7,192.0 657.0,196.0" fill="none" stroke="#062405" stroke-width="8" stroke-linecap="round" stroke-linejoin="round" filter="url(#b3)" opacity="0.6"/>
<ellipse cx="606.0" cy="170.0" rx="9.0" ry="24.0" transform="rotate(12.0 606.0 170.0)" fill="#48d01c" filter="url(#b6)" opacity="0.8"/>
<ellipse cx="575.0" cy="245.0" rx="22.0" ry="12.0" transform="rotate(-30.0 575.0 245.0)" fill="#93de18" filter="url(#b6)" opacity="0.6"/>
<ellipse cx="570.0" cy="262.0" rx="14.0" ry="6.0" transform="rotate(-10.0 570.0 262.0)" fill="#93de18" filter="url(#b4)" opacity="0.5"/>
<path d="M547.0,233.0 C545.5,229.8 549.5,218.8 553.0,212.0 C556.5,205.2 562.4,197.7 567.7,192.0 C573.0,186.3 581.3,180.9 585.0,177.6 C588.7,174.3 589.0,170.8 590.0,172.0 C591.0,173.2 591.0,181.0 591.0,185.0 C591.0,189.0 591.2,191.3 590.0,196.0 C588.8,200.7 586.7,207.8 584.0,213.0 C581.3,218.2 577.7,224.0 574.0,227.0 C570.3,230.0 566.5,230.0 562.0,231.0 C557.5,232.0 548.5,236.2 547.0,233.0Z" fill="#1c6a11" filter="url(#b2)" opacity="1"/>
<ellipse cx="566.0" cy="207.0" rx="4.5" ry="14.0" transform="rotate(42.0 566.0 207.0)" fill="#3cac1a" filter="url(#b2)" opacity="0.95"/>
<path d="M551.0,234.0 C553.0,233.8 559.0,233.8 563.0,233.0 C567.0,232.2 571.3,232.0 575.0,229.0 C578.7,226.0 582.3,220.2 585.0,215.0 C587.7,209.8 590.0,200.8 591.0,198.0" fill="none" stroke="#0b3c09" stroke-width="5" stroke-linecap="round" stroke-linejoin="round" filter="url(#b2)" opacity="0.8"/>
<ellipse cx="322.0" cy="463.0" rx="8.0" ry="28.0" transform="rotate(-8.0 322.0 463.0)" fill="#cdee10" filter="url(#b6)" opacity="1"/>
<ellipse cx="320.0" cy="455.0" rx="4.0" ry="16.0" transform="rotate(-5.0 320.0 455.0)" fill="#cdee10" filter="url(#b3)" opacity="0.7"/>
<ellipse cx="345.0" cy="505.0" rx="14.0" ry="8.0" transform="rotate(20.0 345.0 505.0)" fill="#93de18" filter="url(#b6)" opacity="0.8"/>
<ellipse cx="400.0" cy="470.0" rx="8.0" ry="35.0" transform="rotate(30.0 400.0 470.0)" fill="#93de18" filter="url(#b6)" opacity="0.7"/>
<ellipse cx="440.0" cy="480.0" rx="8.0" ry="30.0" transform="rotate(35.0 440.0 480.0)" fill="#93de18" filter="url(#b6)" opacity="0.6"/>
<ellipse cx="420.0" cy="440.0" rx="6.0" ry="24.0" transform="rotate(35.0 420.0 440.0)" fill="#a8e01c" filter="url(#b4)" opacity="0.5"/>
<ellipse cx="420.0" cy="515.0" rx="40.0" ry="6.0" transform="rotate(-5.0 420.0 515.0)" fill="#46c01a" filter="url(#b4)" opacity="0.6"/>
<path d="M446.0,398.0 C448.7,402.7 459.3,421.3 462.0,426.0" fill="none" stroke="#cdee10" stroke-width="7" stroke-linecap="round" stroke-linejoin="round" filter="url(#b2)" opacity="0.75"/>
<path d="M462.0,426.0 C460.8,430.3 456.2,447.7 455.0,452.0" fill="none" stroke="#93de18" stroke-width="6" stroke-linecap="round" stroke-linejoin="round" filter="url(#b2)" opacity="0.7"/>
<path d="M470.0,392.0 C467.0,400.0 455.0,432.0 452.0,440.0" fill="none" stroke="#1f7d12" stroke-width="5" stroke-linecap="round" stroke-linejoin="round" filter="url(#b2)" opacity="0.45"/>
<path d="M430.0,410.0 C427.0,416.7 415.0,443.3 412.0,450.0" fill="none" stroke="#1f7d12" stroke-width="5" stroke-linecap="round" stroke-linejoin="round" filter="url(#b2)" opacity="0.4"/>
<path d="M492.0,400.0 C488.3,409.2 473.7,445.8 470.0,455.0" fill="none" stroke="#1f7d12" stroke-width="6" stroke-linecap="round" stroke-linejoin="round" filter="url(#b2)" opacity="0.5"/>
<path d="M508.0,380.0 C505.3,388.3 494.7,421.7 492.0,430.0" fill="none" stroke="#1f7d12" stroke-width="5" stroke-linecap="round" stroke-linejoin="round" filter="url(#b2)" opacity="0.45"/>
<path d="M420.0,470.0 C416.7,475.0 403.3,495.0 400.0,500.0" fill="none" stroke="#1f7d12" stroke-width="5" stroke-linecap="round" stroke-linejoin="round" filter="url(#b2)" opacity="0.35"/>
<path d="M440.0,445.0 C437.3,450.8 426.7,474.2 424.0,480.0" fill="none" stroke="#93de18" stroke-width="5" stroke-linecap="round" stroke-linejoin="round" filter="url(#b2)" opacity="0.5"/>
<path d="M484.0,440.0 C481.3,446.7 470.7,473.3 468.0,480.0" fill="none" stroke="#2a8015" stroke-width="5" stroke-linecap="round" stroke-linejoin="round" filter="url(#b2)" opacity="0.5"/>
<path d="M500.0,350.0 C496.7,357.5 483.3,387.5 480.0,395.0" fill="none" stroke="#93de18" stroke-width="5" stroke-linecap="round" stroke-linejoin="round" filter="url(#b2)" opacity="0.45"/>
<path d="M520.0,345.0 C518.0,352.5 510.0,382.5 508.0,390.0" fill="none" stroke="#1f7d12" stroke-width="5" stroke-linecap="round" stroke-linejoin="round" filter="url(#b2)" opacity="0.5"/>
<path d="M395.0,455.0 C393.2,460.8 385.8,484.2 384.0,490.0" fill="none" stroke="#93de18" stroke-width="5" stroke-linecap="round" stroke-linejoin="round" filter="url(#b2)" opacity="0.45"/>
<path d="M408.0,478.0 C409.0,480.3 413.0,489.7 414.0,492.0" fill="none" stroke="#d0e020" stroke-width="5" stroke-linecap="round" stroke-linejoin="round" filter="url(#b2)" opacity="0.5"/>
<path d="M500.0,440.0 C511.3,428.3 532.0,415.0 540.0,420.0 C548.0,425.0 538.0,459.0 548.0,470.0 C558.0,481.0 598.0,479.0 600.0,486.0 C602.0,493.0 581.7,505.7 560.0,512.0 C538.3,518.3 484.7,527.7 470.0,524.0 C455.3,520.3 467.0,504.0 472.0,490.0 C477.0,476.0 488.7,451.7 500.0,440.0Z" fill="#1c5810" filter="url(#b8)" opacity="0.85"/>
<path d="M480.0,486.0 C489.5,478.7 517.7,475.7 531.0,478.0 C544.3,480.3 561.8,494.0 560.0,500.0 C558.2,506.0 534.3,510.3 520.0,514.0 C505.7,517.7 480.7,526.7 474.0,522.0 C467.3,517.3 470.5,493.3 480.0,486.0Z" fill="#174a0d" filter="url(#b4)" opacity="0.8"/>
<path d="M530.0,400.0 C529.8,405.0 529.0,420.0 529.0,430.0 C529.0,440.0 529.8,455.0 530.0,460.0" fill="none" stroke="#15440c" stroke-width="14" stroke-linecap="round" stroke-linejoin="round" filter="url(#b4)" opacity="0.7"/>
<path d="M428.0,183.0 C431.3,180.7 436.0,181.2 440.0,180.0 C444.0,178.8 447.7,176.3 452.0,176.0 C456.3,175.7 461.3,176.7 466.0,178.0 C470.7,179.3 476.0,182.0 480.0,184.0 C484.0,186.0 489.0,187.3 490.0,190.0 C491.0,192.7 489.3,199.0 486.0,200.0 C482.7,201.0 474.7,195.3 470.0,196.0 C465.3,196.7 462.0,202.3 458.0,204.0 C454.0,205.7 450.3,206.2 446.0,206.0 C441.7,205.8 436.3,203.3 432.0,203.0 C427.7,202.7 423.0,202.8 420.0,204.0 C417.0,205.2 414.0,211.7 414.0,210.0 C414.0,208.3 417.7,198.5 420.0,194.0 C422.3,189.5 424.7,185.3 428.0,183.0Z" fill="#1a5c0f" filter="url(#b2)" opacity="0.95"/>
<path d="M432.0,186.0 C434.7,183.7 440.5,184.0 444.0,183.0 C447.5,182.0 449.7,180.2 453.0,180.0 C456.3,179.8 460.2,181.0 464.0,182.0 C467.8,183.0 473.0,184.7 476.0,186.0 C479.0,187.3 483.0,188.8 482.0,190.0 C481.0,191.2 473.7,191.5 470.0,193.0 C466.3,194.5 463.7,197.8 460.0,199.0 C456.3,200.2 451.7,200.5 448.0,200.0 C444.3,199.5 441.3,196.5 438.0,196.0 C434.7,195.5 429.0,198.7 428.0,197.0 C427.0,195.3 429.3,188.3 432.0,186.0Z" fill="#113c0a" filter="url(#b2)" opacity="0.8"/>
<ellipse cx="453.0" cy="190.0" rx="5.0" ry="8.0" transform="rotate(0.0 453.0 190.0)" fill="#2a8a16" filter="url(#b2)" opacity="0.9"/>
<path d="M416.0,212.0 C417.3,210.8 420.0,206.0 424.0,204.5 C428.0,203.0 434.7,203.2 440.0,203.0 C445.3,202.8 451.7,203.8 456.0,203.0 C460.3,202.2 464.3,198.8 466.0,198.0" fill="none" stroke="#3aa81a" stroke-width="3.5" stroke-linecap="round" stroke-linejoin="round" filter="url(#b1)" opacity="0.8"/>
<path d="M434.3,185.6 C435.0,185.8 437.1,185.8 438.5,186.5 C439.9,187.2 441.9,189.4 442.6,190.0" fill="none" stroke="#e6c01e" stroke-width="2.4" stroke-linecap="round" stroke-linejoin="round" opacity="1"/>
<path d="M459.2,193.8 C459.8,193.1 461.1,190.5 462.5,189.5 C463.9,188.5 466.5,187.9 467.3,187.6" fill="none" stroke="#e6c01e" stroke-width="2.4" stroke-linecap="round" stroke-linejoin="round" opacity="1"/>
<path d="M432.0,183.6 C433.0,183.6 436.0,182.9 438.0,183.6 C440.0,184.3 443.0,187.3 444.0,188.0" fill="none" stroke="#000" stroke-width="1.0" stroke-linecap="round" stroke-linejoin="round" opacity="1"/>
<path d="M458.0,195.0 C458.5,194.2 459.2,191.6 461.0,190.0 C462.8,188.4 467.7,186.3 469.0,185.6" fill="none" stroke="#000" stroke-width="1.0" stroke-linecap="round" stroke-linejoin="round" opacity="1"/>
<path d="M447.0,188.0 C447.3,188.8 448.8,191.3 449.0,193.0 C449.2,194.7 448.2,197.2 448.0,198.0" fill="none" stroke="#000" stroke-width="0.9" stroke-linecap="round" stroke-linejoin="round" opacity="1"/>
<path d="M455.0,189.0 C454.8,189.8 453.8,192.5 454.0,194.0 C454.2,195.5 455.7,197.3 456.0,198.0" fill="none" stroke="#000" stroke-width="0.9" stroke-linecap="round" stroke-linejoin="round" opacity="1"/>
<path d="M420.0,200.0 C421.7,199.3 426.7,196.5 430.0,196.0 C433.3,195.5 438.3,196.8 440.0,197.0" fill="none" stroke="#000" stroke-width="0.9" stroke-linecap="round" stroke-linejoin="round" opacity="1"/>
<path d="M470.0,193.0 C471.3,192.5 475.3,190.2 478.0,190.0 C480.7,189.8 484.7,191.7 486.0,192.0" fill="none" stroke="#000" stroke-width="0.9" stroke-linecap="round" stroke-linejoin="round" opacity="1"/>
<clipPath id="mclip"><path d="M408.7,221.4 C409.2,219.9 410.3,215.2 412.0,212.7 C413.7,210.2 415.6,207.8 418.8,206.6 C422.0,205.4 426.3,205.2 431.0,205.3 C435.7,205.4 442.1,207.5 447.0,207.3 C451.9,207.1 456.8,205.6 460.6,204.0 C464.4,202.4 466.9,198.8 470.0,197.9 C473.1,197.0 476.8,196.8 479.4,198.6 C482.0,200.4 484.4,204.7 485.5,208.6 C486.6,212.5 486.2,217.9 486.0,222.0 C485.8,226.1 484.3,231.2 484.0,233.0 C481.7,233.6 474.8,235.4 470.0,236.5 C465.2,237.6 459.7,238.4 455.0,239.5 C450.3,240.6 444.2,242.4 442.0,243.0 C441.2,242.2 439.5,240.2 437.0,238.5 C434.5,236.8 430.8,234.2 427.0,232.5 C423.2,230.8 417.1,229.8 414.0,228.0 C410.9,226.2 409.6,222.5 408.7,221.4Z"/></clipPath>
<g clip-path="url(#mclip)">
<path d="M408.7,221.4 C409.2,219.9 410.3,215.2 412.0,212.7 C413.7,210.2 415.6,207.8 418.8,206.6 C422.0,205.4 426.3,205.2 431.0,205.3 C435.7,205.4 442.1,207.5 447.0,207.3 C451.9,207.1 456.8,205.6 460.6,204.0 C464.4,202.4 466.9,198.8 470.0,197.9 C473.1,197.0 476.8,196.8 479.4,198.6 C482.0,200.4 484.4,204.7 485.5,208.6 C486.6,212.5 486.2,217.9 486.0,222.0 C485.8,226.1 484.3,231.2 484.0,233.0 C481.7,233.6 474.8,235.4 470.0,236.5 C465.2,237.6 459.7,238.4 455.0,239.5 C450.3,240.6 444.2,242.4 442.0,243.0 C441.2,242.2 439.5,240.2 437.0,238.5 C434.5,236.8 430.8,234.2 427.0,232.5 C423.2,230.8 417.1,229.8 414.0,228.0 C410.9,226.2 409.6,222.5 408.7,221.4Z" fill="#5a1c7c" opacity="1"/>
<path d="M412.0,218.0 C413.7,216.8 417.3,212.2 422.0,211.0 C426.7,209.8 434.3,210.7 440.0,210.5 C445.7,210.3 451.0,210.9 456.0,210.0 C461.0,209.1 465.7,205.3 470.0,205.0 C474.3,204.7 480.0,207.5 482.0,208.0" fill="none" stroke="#7c2ea0" stroke-width="5" stroke-linecap="round" stroke-linejoin="round" filter="url(#b1)" opacity="0.9"/>
<path d="M440.0,216.0 C440.0,215.1 442.7,213.2 444.0,213.0 C445.3,212.8 446.7,214.5 448.0,214.5 C449.3,214.5 450.7,212.9 452.0,213.0 C453.3,213.1 455.7,214.2 456.0,215.0 C456.3,215.8 456.0,217.4 454.0,218.0 C452.0,218.6 446.3,218.8 444.0,218.5 C441.7,218.2 440.0,216.9 440.0,216.0Z" fill="#330a48" filter="url(#b1)" opacity="1"/>
<path d="M424.0,227.0 C423.3,224.8 426.0,221.6 428.0,220.0 C430.0,218.4 433.3,217.5 436.0,217.5 C438.7,217.5 441.3,219.9 444.0,220.0 C446.7,220.1 449.0,218.2 452.0,218.0 C455.0,217.8 459.0,218.2 462.0,219.0 C465.0,219.8 468.3,221.2 470.0,223.0 C471.7,224.8 475.3,228.3 472.0,230.0 C468.7,231.7 456.7,232.5 450.0,233.0 C443.3,233.5 436.3,234.0 432.0,233.0 C427.7,232.0 424.7,229.2 424.0,227.0Z" fill="#a458c8" filter="url(#b1)" opacity="1"/>
<ellipse cx="432.0" cy="222.0" rx="2.6" ry="1.8" transform="rotate(-30.0 432.0 222.0)" fill="#f0d0f4" filter="url(#b1)" opacity="1"/>
<ellipse cx="437.0" cy="220.5" rx="1.6" ry="1.2" transform="rotate(0.0 437.0 220.5)" fill="#e8c0f0" filter="url(#b1)" opacity="0.9"/>
<ellipse cx="455.0" cy="223.0" rx="7.0" ry="2.5" transform="rotate(0.0 455.0 223.0)" fill="#bc78dc" filter="url(#b1)" opacity="0.8"/>
<path d="M419.5,207.5 C420.2,206.7 423.1,205.9 424.0,206.5 C424.9,207.1 425.3,209.8 425.0,211.0 C424.7,212.2 422.9,213.4 422.0,213.5 C421.1,213.6 419.9,212.5 419.5,211.5 C419.1,210.5 418.8,208.3 419.5,207.5Z" fill="#f0daf4" opacity="1"/>
<path d="M425.0,207.0 C425.8,206.6 430.2,206.5 431.0,206.8 C431.8,207.1 430.8,208.6 430.0,209.0 C429.2,209.4 426.8,209.8 426.0,209.5 C425.2,209.2 424.2,207.4 425.0,207.0Z" fill="#e6c8ee" opacity="1"/>
<path d="M462.0,204.5 C462.7,203.2 467.3,200.3 470.0,199.5 C472.7,198.7 476.1,198.6 478.0,199.5 C479.9,200.4 481.2,203.2 481.5,205.0 C481.8,206.8 480.9,209.0 480.0,210.0 C479.1,211.0 477.1,211.8 476.0,211.0 C474.9,210.2 475.2,206.2 473.5,205.5 C471.8,204.8 467.9,207.2 466.0,207.0 C464.1,206.8 461.3,205.8 462.0,204.5Z" fill="#ecd0f2" opacity="1"/>
<path d="M481.0,205.0 C481.3,204.3 483.8,206.5 484.5,208.0 C485.2,209.5 485.3,213.3 485.0,214.0 C484.7,214.7 483.2,213.5 482.5,212.0 C481.8,210.5 480.7,205.7 481.0,205.0Z" fill="#dcb8e8" opacity="1"/>
<path d="M416.0,225.0 C416.2,224.1 417.7,222.6 418.5,222.5 C419.3,222.4 420.6,223.4 421.0,224.5 C421.4,225.6 421.7,228.4 421.0,229.0 C420.3,229.6 417.8,228.7 417.0,228.0 C416.2,227.3 415.8,225.9 416.0,225.0Z" fill="#ecd0f2" opacity="1"/>
<rect x="429.0" y="230.5" width="7.0" height="7.0" rx="1.6" fill="#f0d8f4"/>
<rect x="436.8" y="232.0" width="7.0" height="7.5" rx="1.6" fill="#f0d8f4"/>
<rect x="444.6" y="232.6" width="7.5" height="7.5" rx="1.6" fill="#f0d8f4"/>
<rect x="452.8" y="232.0" width="7.5" height="7.0" rx="1.6" fill="#f0d8f4"/>
<rect x="461.0" y="231.0" width="7.0" height="7.0" rx="1.6" fill="#f0d8f4"/>
<rect x="468.6" y="229.5" width="6.5" height="7.0" rx="1.6" fill="#f0d8f4"/>
<path d="M471.0,229.0 C471.3,227.3 472.8,225.8 474.0,225.5 C475.2,225.2 477.0,225.6 478.0,227.0 C479.0,228.4 481.0,232.6 480.0,234.0 C479.0,235.4 473.5,236.3 472.0,235.5 C470.5,234.7 470.7,230.7 471.0,229.0Z" fill="#f0d8f4" opacity="1"/>
</g>
<path d="M408.7,221.4 C409.2,219.9 410.3,215.2 412.0,212.7 C413.7,210.2 415.6,207.8 418.8,206.6 C422.0,205.4 426.3,205.2 431.0,205.3 C435.7,205.4 442.1,207.5 447.0,207.3 C451.9,207.1 456.8,205.6 460.6,204.0 C464.4,202.4 466.9,198.8 470.0,197.9 C473.1,197.0 476.8,196.8 479.4,198.6 C482.0,200.4 484.4,204.7 485.5,208.6 C486.6,212.5 486.2,217.9 486.0,222.0 C485.8,226.1 484.3,231.2 484.0,233.0 C481.7,233.6 474.8,235.4 470.0,236.5 C465.2,237.6 459.7,238.4 455.0,239.5 C450.3,240.6 444.2,242.4 442.0,243.0 C441.2,242.2 439.5,240.2 437.0,238.5 C434.5,236.8 430.8,234.2 427.0,232.5 C423.2,230.8 417.1,229.8 414.0,228.0 C410.9,226.2 409.6,222.5 408.7,221.4Z" fill="none" stroke="#000" stroke-width="2.0" stroke-linecap="round" stroke-linejoin="round" opacity="1"/>
<path d="M572.0,262.2 C572.5,261.0 573.9,257.0 575.0,255.0 C576.1,253.0 576.9,252.1 578.9,250.3 C580.9,248.5 584.9,245.1 587.0,244.0 C589.1,242.9 589.8,244.4 591.4,243.8 C593.0,243.2 594.8,240.8 596.5,240.2 C598.2,239.6 600.7,240.4 601.5,240.4 C601.6,241.6 602.5,245.1 602.2,247.8 C601.9,250.5 601.4,254.1 599.6,256.6 C597.8,259.1 594.4,261.5 591.4,262.8 C588.4,264.1 584.6,264.8 581.4,264.7 C578.2,264.6 573.6,262.6 572.0,262.2Z" fill="#e6381a" filter="url(#b1)" opacity="0.5"/>
<path d="M572.0,262.2 C572.5,261.0 573.9,257.0 575.0,255.0 C576.1,253.0 576.9,252.1 578.9,250.3 C580.9,248.5 584.9,245.1 587.0,244.0 C589.1,242.9 589.8,244.4 591.4,243.8 C593.0,243.2 594.8,240.8 596.5,240.2 C598.2,239.6 600.7,240.4 601.5,240.4 C601.6,241.6 602.5,245.1 602.2,247.8 C601.9,250.5 601.4,254.1 599.6,256.6 C597.8,259.1 594.4,261.5 591.4,262.8 C588.4,264.1 584.6,264.8 581.4,264.7 C578.2,264.6 573.6,262.6 572.0,262.2Z" fill="#e6381a" opacity="1"/>
<path d="M574.0,261.0 C575.0,260.4 578.2,258.2 580.0,257.5 C581.8,256.8 583.3,257.8 585.0,257.0 C586.7,256.2 588.3,253.6 590.0,252.5 C591.7,251.4 593.3,252.1 595.0,250.5 C596.7,248.9 599.2,244.2 600.0,243.0" fill="none" stroke="#6ab020" stroke-width="0.9" stroke-linecap="round" stroke-linejoin="round" opacity="1"/>
<path d="M620.3,212.0 C619.5,212.1 616.4,211.4 615.3,212.6 C614.1,213.8 613.4,216.2 613.4,218.9 C613.4,221.6 615.2,226.0 615.3,228.9 C615.4,231.8 615.0,234.4 614.0,236.5 C613.0,238.6 610.2,239.4 609.0,241.5 C607.8,243.6 607.3,247.8 607.0,249.0" fill="none" stroke="#071f06" stroke-width="4.0" stroke-linecap="round" stroke-linejoin="round" opacity="1"/>
<path d="M615.3,228.9 C616.5,229.1 620.7,229.4 622.8,230.2 C624.9,231.0 626.9,232.7 627.9,233.9 C628.9,235.2 628.8,237.1 629.0,237.7" fill="none" stroke="#071f06" stroke-width="4.0" stroke-linecap="round" stroke-linejoin="round" opacity="1"/>
<path d="M620.3,212.0 C619.5,212.1 616.4,211.4 615.3,212.6 C614.1,213.8 613.4,216.2 613.4,218.9 C613.4,221.6 615.2,226.0 615.3,228.9 C615.4,231.8 615.0,234.4 614.0,236.5 C613.0,238.6 610.2,239.4 609.0,241.5 C607.8,243.6 607.3,247.8 607.0,249.0" fill="none" stroke="#379a1a" stroke-width="1.3" stroke-linecap="round" stroke-linejoin="round" opacity="1"/>
<path d="M615.3,228.9 C616.5,229.1 620.7,229.4 622.8,230.2 C624.9,231.0 626.9,232.7 627.9,233.9 C628.9,235.2 628.8,237.1 629.0,237.7" fill="none" stroke="#379a1a" stroke-width="1.3" stroke-linecap="round" stroke-linejoin="round" opacity="1"/>
<path d="M386.0,211.0 C385.7,212.8 388.2,218.5 384.0,222.0 C379.8,225.5 368.3,227.5 361.0,232.0 C353.7,236.5 346.0,242.7 340.0,249.0 C334.0,255.3 328.7,261.5 325.0,270.0 C321.3,278.5 319.2,295.0 318.0,300.0" fill="none" stroke="#000" stroke-width="2.2" stroke-linecap="round" stroke-linejoin="round" opacity="1"/>
<path d="M384.0,222.0 C387.0,222.7 397.0,225.0 402.0,226.0 C407.0,227.0 410.0,226.8 414.0,228.0 C418.0,229.2 422.3,231.2 426.0,233.0 C429.7,234.8 433.2,237.3 436.0,239.0 C438.8,240.7 441.8,242.3 443.0,243.0" fill="none" stroke="#000" stroke-width="2.8" stroke-linecap="round" stroke-linejoin="round" opacity="1"/>
<path d="M416.5,259.0 C417.9,257.8 422.0,254.2 425.0,252.0 C428.0,249.8 429.5,247.7 434.5,245.5 C439.5,243.3 447.4,239.9 455.0,238.6 C462.6,237.3 472.1,236.8 480.0,237.5 C487.9,238.2 495.9,240.9 502.7,243.0 C509.5,245.1 516.3,247.7 521.0,250.0 C525.7,252.3 529.3,255.7 531.0,256.8" fill="none" stroke="#000" stroke-width="3.0" stroke-linecap="round" stroke-linejoin="round" opacity="1"/>
<path d="M510.0,245.5 C511.8,246.2 517.5,248.1 521.0,250.0 C524.5,251.9 529.3,255.7 531.0,256.8" fill="none" stroke="#000" stroke-width="3.8" stroke-linecap="round" stroke-linejoin="round" opacity="1"/>
<path d="M417.0,257.0 C415.0,259.5 408.0,266.7 405.0,272.0 C402.0,277.3 400.5,282.7 399.0,289.0 C397.5,295.3 396.5,306.5 396.0,310.0" fill="none" stroke="#000" stroke-width="1.8" stroke-linecap="round" stroke-linejoin="round" opacity="1"/>
<path d="M318.0,300.0 C318.7,300.7 319.0,302.3 322.0,304.0 C325.0,305.7 330.3,308.8 336.0,310.0 C341.7,311.2 347.8,310.7 356.0,311.0 C364.2,311.3 378.3,312.2 385.0,312.0 C391.7,311.8 394.2,310.3 396.0,310.0" fill="none" stroke="#000" stroke-width="2.8" stroke-linecap="round" stroke-linejoin="round" opacity="1"/>
<path d="M390.0,312.0 C393.8,312.8 403.3,316.0 413.0,317.0 C422.7,318.0 438.2,318.2 448.0,318.0 C457.8,317.8 464.2,317.2 472.0,316.0 C479.8,314.8 488.5,313.0 495.0,311.0 C501.5,309.0 506.3,307.2 511.0,304.0 C515.7,300.8 521.0,294.0 523.0,292.0" fill="none" stroke="#000" stroke-width="3.2" stroke-linecap="round" stroke-linejoin="round" opacity="1"/>
<ellipse cx="334.5" cy="291.5" rx="9.5" ry="5" transform="rotate(12 334.5 291.5)" fill="#a8e020" stroke="#000" stroke-width="1.2"/>
<ellipse cx="492.5" cy="301" rx="12" ry="5.5" transform="rotate(-10 492.5 301)" fill="none" stroke="#000" stroke-width="1.1"/>
<path d="M321.7,326.2 C323.6,321.6 325.6,318.4 329.0,316.0 C332.4,313.6 336.8,311.8 341.8,311.8 C346.8,311.8 354.0,313.6 359.0,316.0 C364.0,318.4 370.1,321.4 372.0,326.0 C373.9,330.6 371.6,337.1 370.6,343.4 C369.7,349.7 368.0,358.3 366.3,363.6 C364.6,368.9 364.6,372.7 360.5,375.0 C356.4,377.3 347.6,377.4 341.8,377.4 C336.1,377.4 329.8,377.8 326.0,375.0 C322.2,372.2 320.3,366.0 318.9,360.7 C317.5,355.4 316.9,349.1 317.4,343.4 C317.9,337.6 319.8,330.8 321.7,326.2Z" fill="none" stroke="#000" stroke-width="2.4" stroke-linecap="round" stroke-linejoin="round" opacity="1"/>
<path d="M372.0,332.0 C374.2,330.1 380.5,323.2 385.0,320.5 C389.5,317.8 396.7,316.3 399.0,315.5" fill="none" stroke="#000" stroke-width="2.4" stroke-linecap="round" stroke-linejoin="round" opacity="1"/>
<path d="M372.0,332.0 C371.5,335.8 369.7,348.8 369.0,355.0 C368.3,361.2 367.2,364.9 368.0,369.0 C368.8,373.1 368.3,377.2 373.5,379.5 C378.7,381.8 390.4,382.2 399.0,383.0 C407.6,383.8 420.7,384.2 425.0,384.5" fill="none" stroke="#000" stroke-width="2.4" stroke-linecap="round" stroke-linejoin="round" opacity="1"/>
<path d="M469.0,320.0 C469.2,322.8 471.2,330.7 470.5,337.0 C469.8,343.3 468.4,351.1 464.6,357.6 C460.9,364.1 454.6,371.5 448.0,376.0 C441.4,380.5 428.8,383.1 425.0,384.5" fill="none" stroke="#000" stroke-width="2.0" stroke-linecap="round" stroke-linejoin="round" opacity="1"/>
<path d="M330.3,380.0 C330.6,382.8 330.6,392.7 331.8,397.0 C333.0,401.3 333.5,404.3 337.5,405.9 C341.5,407.5 351.2,406.9 356.0,406.4 C360.8,405.9 364.2,406.0 366.0,403.0 C367.8,400.0 367.0,392.8 367.0,388.6 C367.0,384.4 366.2,379.8 366.0,378.0" fill="none" stroke="#000" stroke-width="2.2" stroke-linecap="round" stroke-linejoin="round" opacity="1"/>
<path d="M369.0,390.0 C369.3,392.6 367.9,402.8 370.6,405.9 C373.3,409.0 378.8,408.2 385.0,408.7 C391.2,409.2 402.3,410.1 408.0,408.7 C413.7,407.2 417.2,403.4 419.4,400.0 C421.6,396.6 420.9,391.4 421.0,388.6 C421.1,385.8 420.2,383.9 420.0,383.0" fill="none" stroke="#000" stroke-width="2.2" stroke-linecap="round" stroke-linejoin="round" opacity="1"/>
<path d="M333.8,408.0 C333.7,409.5 332.4,414.0 333.0,417.0 C333.6,420.0 334.2,424.2 337.5,426.0 C340.8,427.8 348.4,428.5 353.0,428.0 C357.6,427.5 362.4,425.7 364.8,423.0 C367.2,420.3 367.4,414.4 367.7,411.6 C368.0,408.8 366.7,406.9 366.5,406.0" fill="none" stroke="#000" stroke-width="2.1" stroke-linecap="round" stroke-linejoin="round" opacity="1"/>
<path d="M370.0,409.0 C370.1,411.3 369.1,419.7 370.6,423.0 C372.1,426.3 374.3,427.7 379.0,428.9 C383.7,430.1 393.7,430.5 399.0,430.0 C404.3,429.5 408.5,428.6 410.8,426.0 C413.1,423.4 412.8,417.3 412.8,414.5 C412.8,411.7 411.3,409.9 411.0,409.0" fill="none" stroke="#000" stroke-width="2.1" stroke-linecap="round" stroke-linejoin="round" opacity="1"/>
<ellipse cx="369.7" cy="453" rx="1.6" ry="3.6" fill="#1a5a10" stroke="#000" stroke-width="1"/>
<path d="M352.0,434.0 C353.7,434.5 360.3,436.5 362.0,437.0" fill="none" stroke="#000" stroke-width="0.9" stroke-linecap="round" stroke-linejoin="round" opacity="1"/>
<path d="M355.0,440.0 C356.8,440.3 364.2,441.7 366.0,442.0" fill="none" stroke="#000" stroke-width="0.9" stroke-linecap="round" stroke-linejoin="round" opacity="1"/>
<path d="M358.0,446.0 C359.5,446.2 365.5,446.8 367.0,447.0" fill="none" stroke="#000" stroke-width="0.9" stroke-linecap="round" stroke-linejoin="round" opacity="1"/>
<path d="M374.0,436.0 C376.3,436.0 385.7,436.0 388.0,436.0" fill="none" stroke="#000" stroke-width="0.9" stroke-linecap="round" stroke-linejoin="round" opacity="1"/>
<path d="M374.0,441.0 C376.0,440.8 384.0,440.2 386.0,440.0" fill="none" stroke="#000" stroke-width="0.9" stroke-linecap="round" stroke-linejoin="round" opacity="1"/>
<path d="M374.0,446.0 C375.7,445.8 382.3,445.2 384.0,445.0" fill="none" stroke="#000" stroke-width="0.9" stroke-linecap="round" stroke-linejoin="round" opacity="1"/>
<path d="M360.0,451.0 C361.0,451.2 365.0,451.8 366.0,452.0" fill="none" stroke="#000" stroke-width="0.9" stroke-linecap="round" stroke-linejoin="round" opacity="1"/>
<path d="M294.0,259.0 C295.0,259.5 297.7,260.7 300.0,262.0 C302.3,263.3 305.1,264.1 308.0,267.0 C310.9,269.9 315.5,275.8 317.7,279.7 C319.9,283.6 320.4,288.6 321.0,290.4" fill="none" stroke="#000" stroke-width="2.6" stroke-linecap="round" stroke-linejoin="round" opacity="1"/>
<path d="M311.0,328.0 C310.7,328.7 309.0,330.7 309.0,332.0 C309.0,333.3 311.0,334.5 311.0,336.0 C311.0,337.5 309.0,339.3 309.0,341.0 C309.0,342.7 310.5,344.2 311.0,346.0 C311.5,347.8 311.8,351.0 312.0,352.0" fill="none" stroke="#000" stroke-width="1.0" stroke-linecap="round" stroke-linejoin="round" opacity="1"/>
<path d="M314.0,322.0 C313.7,322.7 312.3,325.3 312.0,326.0" fill="none" stroke="#000" stroke-width="0.9" stroke-linecap="round" stroke-linejoin="round" opacity="1"/>
<path d="M310.0,392.0 C310.7,392.7 313.3,395.3 314.0,396.0" fill="none" stroke="#000" stroke-width="0.9" stroke-linecap="round" stroke-linejoin="round" opacity="1"/>
<path d="M312.0,403.0 C312.7,403.7 315.3,406.3 316.0,407.0" fill="none" stroke="#000" stroke-width="0.9" stroke-linecap="round" stroke-linejoin="round" opacity="1"/>
<path d="M313.0,412.0 C313.7,412.5 316.3,414.5 317.0,415.0" fill="none" stroke="#000" stroke-width="0.9" stroke-linecap="round" stroke-linejoin="round" opacity="1"/>
<path d="M322.0,448.0 C322.7,448.7 325.3,451.3 326.0,452.0" fill="none" stroke="#000" stroke-width="0.9" stroke-linecap="round" stroke-linejoin="round" opacity="1"/>
<path d="M331.0,458.0 C332.2,458.3 336.8,459.7 338.0,460.0" fill="none" stroke="#000" stroke-width="0.9" stroke-linecap="round" stroke-linejoin="round" opacity="1"/>
<path d="M346.0,476.0 C347.0,475.7 351.0,474.3 352.0,474.0" fill="none" stroke="#000" stroke-width="0.9" stroke-linecap="round" stroke-linejoin="round" opacity="1"/>
<path d="M333.0,494.0 C335.2,493.3 343.8,490.7 346.0,490.0" fill="none" stroke="#000" stroke-width="0.9" stroke-linecap="round" stroke-linejoin="round" opacity="1"/>
<path d="M376.0,250.0 C378.0,249.5 384.3,247.3 388.0,247.0 C391.7,246.7 396.3,247.8 398.0,248.0" fill="none" stroke="#000" stroke-width="0.9" stroke-linecap="round" stroke-linejoin="round" opacity="1"/>
<path d="M380.0,260.0 C382.0,259.7 388.2,257.8 392.0,258.0 C395.8,258.2 401.2,260.5 403.0,261.0" fill="none" stroke="#000" stroke-width="0.9" stroke-linecap="round" stroke-linejoin="round" opacity="1"/>
<path d="M370.0,282.0 C372.3,282.3 379.7,282.8 384.0,284.0 C388.3,285.2 394.0,288.2 396.0,289.0" fill="none" stroke="#000" stroke-width="0.9" stroke-linecap="round" stroke-linejoin="round" opacity="1"/>
<path d="M372.0,292.0 C374.3,292.7 382.2,294.7 386.0,296.0 C389.8,297.3 393.5,299.3 395.0,300.0" fill="none" stroke="#000" stroke-width="0.9" stroke-linecap="round" stroke-linejoin="round" opacity="1"/>
<path d="M404.0,268.0 C406.7,267.0 414.7,263.7 420.0,262.0 C425.3,260.3 433.3,258.7 436.0,258.0" fill="none" stroke="#000" stroke-width="0.9" stroke-linecap="round" stroke-linejoin="round" opacity="1"/>
<path d="M402.0,276.0 C405.0,275.0 413.0,272.3 420.0,270.0 C427.0,267.7 440.0,263.3 444.0,262.0" fill="none" stroke="#000" stroke-width="0.9" stroke-linecap="round" stroke-linejoin="round" opacity="1"/>
<path d="M400.0,289.0 C402.0,288.5 408.0,286.3 412.0,286.0 C416.0,285.7 422.0,286.8 424.0,287.0" fill="none" stroke="#000" stroke-width="0.9" stroke-linecap="round" stroke-linejoin="round" opacity="1"/>
<path d="M398.0,296.0 C399.7,295.7 406.3,294.3 408.0,294.0" fill="none" stroke="#000" stroke-width="0.9" stroke-linecap="round" stroke-linejoin="round" opacity="1"/>
<path d="M372.0,338.0 C374.0,337.3 379.7,335.3 384.0,334.0 C388.3,332.7 395.7,330.7 398.0,330.0" fill="none" stroke="#000" stroke-width="0.9" stroke-linecap="round" stroke-linejoin="round" opacity="1"/>
<path d="M371.0,350.0 C373.2,350.3 379.8,351.0 384.0,352.0 C388.2,353.0 394.0,355.3 396.0,356.0" fill="none" stroke="#000" stroke-width="0.9" stroke-linecap="round" stroke-linejoin="round" opacity="1"/>
<path d="M370.0,330.0 C371.7,329.3 378.3,326.7 380.0,326.0" fill="none" stroke="#000" stroke-width="0.9" stroke-linecap="round" stroke-linejoin="round" opacity="1"/>
<path d="M356.0,340.0 C357.3,340.7 361.7,342.3 364.0,344.0 C366.3,345.7 369.0,349.0 370.0,350.0" fill="none" stroke="#000" stroke-width="0.9" stroke-linecap="round" stroke-linejoin="round" opacity="1"/>
<path d="M352.0,352.0 C353.7,353.0 359.3,356.3 362.0,358.0 C364.7,359.7 367.0,361.3 368.0,362.0" fill="none" stroke="#000" stroke-width="0.9" stroke-linecap="round" stroke-linejoin="round" opacity="1"/>
<path d="M504.0,340.0 C503.3,342.9 502.3,352.3 499.6,357.6 C496.9,362.9 493.4,367.9 488.0,371.6 C482.6,375.3 470.5,378.6 467.0,380.0" fill="none" stroke="#000" stroke-width="1.4" stroke-linecap="round" stroke-linejoin="round" opacity="1"/>
<path d="M475.0,357.0 C476.2,356.2 479.2,353.3 482.0,352.0 C484.8,350.7 490.3,349.5 492.0,349.0" fill="none" stroke="#000" stroke-width="0.9" stroke-linecap="round" stroke-linejoin="round" opacity="1"/>
<path d="M480.0,362.0 C481.0,360.7 485.0,355.3 486.0,354.0" fill="none" stroke="#000" stroke-width="0.9" stroke-linecap="round" stroke-linejoin="round" opacity="1"/>
<path d="M446.0,327.0 C447.0,326.7 450.5,324.3 452.0,325.0 C453.5,325.7 454.5,330.0 455.0,331.0" fill="none" stroke="#000" stroke-width="0.9" stroke-linecap="round" stroke-linejoin="round" opacity="1"/>
<path d="M487.0,330.0 C487.8,329.5 491.2,327.5 492.0,327.0" fill="none" stroke="#000" stroke-width="0.9" stroke-linecap="round" stroke-linejoin="round" opacity="1"/>
<path d="M466.0,400.0 C467.0,399.3 471.3,395.7 472.0,396.0 C472.7,396.3 470.3,401.0 470.0,402.0" fill="none" stroke="#000" stroke-width="0.9" stroke-linecap="round" stroke-linejoin="round" opacity="1"/>
<path d="M455.0,412.0 C456.2,411.3 460.8,408.7 462.0,408.0" fill="none" stroke="#000" stroke-width="0.9" stroke-linecap="round" stroke-linejoin="round" opacity="1"/>
<path d="M523.0,292.0 C525.7,290.8 532.8,286.7 539.0,285.0 C545.2,283.3 556.5,282.3 560.0,281.8" fill="none" stroke="#000" stroke-width="1.4" stroke-linecap="round" stroke-linejoin="round" opacity="1"/>
<path d="M548.0,296.0 C549.7,295.0 555.0,290.8 558.0,290.0 C561.0,289.2 563.2,290.7 566.0,291.0 C568.8,291.3 573.5,291.8 575.0,292.0" fill="none" stroke="#000" stroke-width="1.0" stroke-linecap="round" stroke-linejoin="round" opacity="1"/>
<path d="M534.0,330.0 C536.3,328.7 543.3,325.0 548.0,322.0 C552.7,319.0 559.7,313.7 562.0,312.0" fill="none" stroke="#000" stroke-width="1.0" stroke-linecap="round" stroke-linejoin="round" opacity="1"/>
<path d="M524.0,352.0 C525.7,351.0 531.3,348.0 534.0,346.0 C536.7,344.0 539.0,341.0 540.0,340.0" fill="none" stroke="#000" stroke-width="1.0" stroke-linecap="round" stroke-linejoin="round" opacity="1"/>
<path d="M470.0,330.0 C471.3,329.3 476.7,326.7 478.0,326.0" fill="none" stroke="#000" stroke-width="0.9" stroke-linecap="round" stroke-linejoin="round" opacity="1"/>
<path d="M340.0,183.0 C341.2,182.2 344.3,179.0 347.0,178.0 C349.7,177.0 352.8,176.8 356.0,177.0 C359.2,177.2 363.5,178.2 366.0,179.0 C368.5,179.8 370.2,181.5 371.0,182.0" fill="none" stroke="#000" stroke-width="1.3" stroke-linecap="round" stroke-linejoin="round" opacity="1"/>
<path d="M366.0,186.0 C365.4,187.5 363.2,192.2 362.5,195.0 C361.8,197.8 361.2,201.1 362.0,203.0 C362.8,204.9 365.1,205.5 367.0,206.5 C368.9,207.5 372.4,208.6 373.5,209.0" fill="none" stroke="#0a2a08" stroke-width="3.0" stroke-linecap="round" stroke-linejoin="round" opacity="1"/>
<path d="M362.0,203.0 C361.2,204.5 359.0,209.2 357.0,212.0 C355.0,214.8 351.2,218.7 350.0,220.0" fill="none" stroke="#0a2a08" stroke-width="3.0" stroke-linecap="round" stroke-linejoin="round" opacity="1"/>
<path d="M366.0,186.0 C365.4,187.5 363.2,192.2 362.5,195.0 C361.8,197.8 361.2,201.1 362.0,203.0 C362.8,204.9 365.1,205.5 367.0,206.5 C368.9,207.5 372.4,208.6 373.5,209.0" fill="none" stroke="#37a01a" stroke-width="0.9" stroke-linecap="round" stroke-linejoin="round" opacity="1"/>
<path d="M362.0,203.0 C361.2,204.5 359.0,209.2 357.0,212.0 C355.0,214.8 351.2,218.7 350.0,220.0" fill="none" stroke="#37a01a" stroke-width="0.9" stroke-linecap="round" stroke-linejoin="round" opacity="1"/>
<path d="M299.0,228.0 C299.2,229.5 300.1,233.4 300.5,237.0 C300.9,240.6 301.9,246.0 301.5,249.5 C301.1,253.0 298.6,256.6 298.0,258.0" fill="none" stroke="#000" stroke-width="1.3" stroke-linecap="round" stroke-linejoin="round" opacity="1"/>
<path d="M301.5,249.5 C302.2,250.2 304.4,252.1 306.0,254.0 C307.6,255.9 310.2,259.8 311.0,261.0" fill="none" stroke="#000" stroke-width="1.3" stroke-linecap="round" stroke-linejoin="round" opacity="1"/>
<path d="M549.0,232.0 C551.2,231.8 557.8,231.8 562.0,231.0 C566.2,230.2 570.3,230.0 574.0,227.0 C577.7,224.0 581.3,218.2 584.0,213.0 C586.7,207.8 589.1,202.2 590.0,196.0 C590.9,189.8 589.6,179.3 589.5,176.0" fill="none" stroke="#000" stroke-width="4.2" stroke-linecap="round" stroke-linejoin="round" opacity="1"/>
<path d="M613.7,210.6 C613.2,211.8 611.3,215.4 611.0,218.0 C610.7,220.6 612.2,223.6 612.0,226.4 C611.8,229.2 610.7,232.1 610.0,235.0 C609.3,237.9 608.3,242.2 608.0,243.7" fill="none" stroke="#000" stroke-width="1.2" stroke-linecap="round" stroke-linejoin="round" opacity="1"/>
<path d="M612.0,227.0 C613.3,227.3 617.3,227.9 620.0,229.0 C622.7,230.1 626.7,232.8 628.0,233.6" fill="none" stroke="#000" stroke-width="1.2" stroke-linecap="round" stroke-linejoin="round" opacity="1"/>
<path d="M611.0,212.0 C611.7,211.5 613.7,209.2 615.0,209.0 C616.3,208.8 618.3,210.7 619.0,211.0" fill="none" stroke="#000" stroke-width="1.0" stroke-linecap="round" stroke-linejoin="round" opacity="1"/>
<path d="M617.0,155.0 C617.7,154.5 619.7,152.3 621.0,152.0 C622.3,151.7 624.3,152.8 625.0,153.0" fill="none" stroke="#000" stroke-width="0.9" stroke-linecap="round" stroke-linejoin="round" opacity="1"/>
<path d="M620.0,157.0 C620.5,157.5 622.5,159.5 623.0,160.0" fill="none" stroke="#000" stroke-width="0.9" stroke-linecap="round" stroke-linejoin="round" opacity="1"/>
<path d="M572.0,232.0 C573.3,231.3 577.3,229.5 580.0,228.0 C582.7,226.5 586.7,223.8 588.0,223.0" fill="none" stroke="#000" stroke-width="0.9" stroke-linecap="round" stroke-linejoin="round" opacity="1"/>
<path d="M576.0,236.0 C577.3,235.2 582.7,231.8 584.0,231.0" fill="none" stroke="#000" stroke-width="0.9" stroke-linecap="round" stroke-linejoin="round" opacity="1"/>
<path d="M631.0,163.0 C631.2,163.8 631.8,167.2 632.0,168.0" fill="none" stroke="#000" stroke-width="0.9" stroke-linecap="round" stroke-linejoin="round" opacity="1"/>
<path d="M398.0,225.0 C399.0,223.5 401.7,218.8 404.0,216.0 C406.3,213.2 409.3,210.3 412.0,208.0 C414.7,205.7 418.7,203.0 420.0,202.0" fill="none" stroke="#000" stroke-width="1.0" stroke-linecap="round" stroke-linejoin="round" opacity="1"/>
<path d="M502.5,203.0 C502.9,203.7 504.4,206.1 505.0,207.0 C505.6,207.9 505.8,208.2 506.0,208.5" fill="none" stroke="#000" stroke-width="1.1" stroke-linecap="round" stroke-linejoin="round" opacity="1"/>
<path d="M509.5,208.0 C510.1,208.5 512.0,209.9 513.0,211.0 C514.0,212.1 515.1,213.9 515.5,214.5" fill="none" stroke="#000" stroke-width="1.1" stroke-linecap="round" stroke-linejoin="round" opacity="1"/>
<path d="M489.7,236.0 C490.1,234.8 491.0,231.2 492.0,229.0 C493.0,226.8 495.1,224.0 495.7,223.0" fill="none" stroke="#000" stroke-width="1.0" stroke-linecap="round" stroke-linejoin="round" opacity="1"/>
<path d="M515.0,237.0 C515.5,236.5 516.8,234.8 518.0,234.0 C519.2,233.2 521.3,232.3 522.0,232.0" fill="none" stroke="#000" stroke-width="1.0" stroke-linecap="round" stroke-linejoin="round" opacity="1"/>
<path d="M516.0,240.5 C517.0,240.4 519.8,239.8 522.0,240.0 C524.2,240.2 527.8,241.2 529.0,241.5" fill="none" stroke="#000" stroke-width="1.0" stroke-linecap="round" stroke-linejoin="round" opacity="1"/>
<path d="M511.0,243.0 C512.2,243.2 515.8,243.4 518.0,244.0 C520.2,244.6 523.0,246.1 524.0,246.5" fill="none" stroke="#000" stroke-width="1.0" stroke-linecap="round" stroke-linejoin="round" opacity="1"/>
<path d="M407.0,473.0 C407.8,472.5 409.8,470.3 412.0,470.0 C414.2,469.7 418.7,470.8 420.0,471.0" fill="none" stroke="#000" stroke-width="1.0" stroke-linecap="round" stroke-linejoin="round" opacity="1"/>
<path d="M410.0,484.0 C411.3,483.0 414.7,479.8 418.0,478.0 C421.3,476.2 426.0,474.7 430.0,473.0 C434.0,471.3 440.0,468.8 442.0,468.0" fill="none" stroke="#000" stroke-width="1.3" stroke-linecap="round" stroke-linejoin="round" opacity="1"/>
<path d="M409.0,492.0 C409.8,491.0 412.2,487.3 414.0,486.0 C415.8,484.7 419.0,484.3 420.0,484.0" fill="none" stroke="#000" stroke-width="1.0" stroke-linecap="round" stroke-linejoin="round" opacity="1"/>
<path d="M428.0,505.0 C428.8,503.8 431.0,499.0 433.0,498.0 C435.0,497.0 437.8,499.2 440.0,499.0 C442.2,498.8 445.0,497.3 446.0,497.0" fill="none" stroke="#000" stroke-width="1.1" stroke-linecap="round" stroke-linejoin="round" opacity="1"/>
<path d="M466.0,470.0 C467.0,468.7 469.7,464.0 472.0,462.0 C474.3,460.0 478.0,459.0 480.0,458.0 C482.0,457.0 483.3,456.3 484.0,456.0" fill="none" stroke="#000" stroke-width="1.1" stroke-linecap="round" stroke-linejoin="round" opacity="1"/>
<path d="M468.0,482.0 C469.0,480.0 473.0,472.0 474.0,470.0" fill="none" stroke="#000" stroke-width="0.9" stroke-linecap="round" stroke-linejoin="round" opacity="1"/>
<path d="M490.5,461.0 C491.2,462.5 493.6,466.9 495.0,470.0 C496.4,473.1 499.4,476.7 498.6,479.7 C497.8,482.7 493.1,485.8 490.0,488.0 C486.9,490.2 481.9,490.3 479.7,493.0 C477.5,495.7 477.4,502.2 477.0,504.0" fill="none" stroke="#000" stroke-width="1.8" stroke-linecap="round" stroke-linejoin="round" opacity="1"/>
<path d="M498.6,479.7 C499.8,479.9 503.3,480.1 506.0,481.0 C508.7,481.9 512.4,483.2 514.7,485.0 C517.0,486.8 519.1,490.8 520.0,492.0" fill="none" stroke="#000" stroke-width="1.6" stroke-linecap="round" stroke-linejoin="round" opacity="1"/>
<path d="M525.5,458.0 C525.9,460.0 527.8,465.9 528.0,470.0 C528.2,474.1 526.6,478.7 526.9,482.4 C527.2,486.1 529.5,490.4 530.0,492.0" fill="none" stroke="#000" stroke-width="1.4" stroke-linecap="round" stroke-linejoin="round" opacity="1"/>
<path d="M540.0,470.0 C540.8,471.7 542.3,477.7 545.0,480.0 C547.7,482.3 554.2,483.3 556.0,484.0" fill="none" stroke="#000" stroke-width="1.2" stroke-linecap="round" stroke-linejoin="round" opacity="1"/>
<path d="M452.0,408.0 C453.0,407.3 456.2,405.7 458.0,404.0 C459.8,402.3 462.2,399.0 463.0,398.0" fill="none" stroke="#000" stroke-width="1.1" stroke-linecap="round" stroke-linejoin="round" opacity="1"/>
<path d="M460.0,415.0 C460.3,415.7 461.7,418.3 462.0,419.0" fill="none" stroke="#000" stroke-width="1.0" stroke-linecap="round" stroke-linejoin="round" opacity="1"/>
<path d="M492.0,428.0 C492.7,426.0 494.7,419.3 496.0,416.0 C497.3,412.7 499.3,409.3 500.0,408.0" fill="none" stroke="#000" stroke-width="1.0" stroke-linecap="round" stroke-linejoin="round" opacity="1"/>
<path d="M466.0,392.0 C467.0,391.7 471.0,390.3 472.0,390.0" fill="none" stroke="#000" stroke-width="0.9" stroke-linecap="round" stroke-linejoin="round" opacity="1"/>
<path d="M386.0,436.0 C387.0,436.7 391.0,439.3 392.0,440.0" fill="none" stroke="#000" stroke-width="0.9" stroke-linecap="round" stroke-linejoin="round" opacity="1"/>
<path d="M284.4,249.0 C283.0,241.0 282.1,225.5 283.0,215.0 C283.9,204.5 286.4,194.8 290.0,186.0 C293.6,177.2 298.7,168.7 304.5,162.0 C310.3,155.3 318.4,149.8 324.6,146.0 C330.9,142.2 336.8,139.7 342.0,139.0 C347.2,138.3 351.7,139.6 356.0,141.7 C360.3,143.8 365.0,147.6 367.7,151.7 C370.4,155.8 371.4,161.8 372.0,166.0 C372.6,170.2 371.2,175.2 371.0,177.0 C371.7,178.2 373.3,180.7 375.0,184.0 C376.7,187.3 379.2,192.6 381.0,197.0 C382.8,201.4 385.2,208.2 386.0,210.5 C387.2,209.8 390.3,207.8 393.0,206.0 C395.7,204.2 399.0,201.9 402.0,199.5 C405.0,197.1 408.2,193.8 411.0,191.5 C413.8,189.2 417.2,186.9 418.5,186.0 C418.1,182.3 415.7,170.9 415.8,164.0 C415.9,157.1 417.6,150.5 419.4,144.5 C421.2,138.5 423.8,132.5 426.5,128.0 C429.2,123.5 432.5,120.0 435.5,117.6 C438.5,115.2 441.5,113.9 444.5,113.6 C447.5,113.3 450.9,114.2 453.5,115.8 C456.1,117.4 458.5,120.3 459.8,123.0 C461.1,125.7 461.8,129.3 461.5,132.0 C461.2,134.7 459.9,137.3 458.0,139.0 C456.1,140.7 452.3,142.0 449.9,142.0 C447.5,142.0 445.2,140.4 443.6,139.0 C442.0,137.6 440.6,134.6 440.0,133.7 C439.2,134.9 436.6,137.4 435.5,141.0 C434.4,144.6 433.5,150.8 433.4,155.0 C433.2,159.2 433.7,162.7 434.6,166.0 C435.5,169.3 437.5,172.9 439.0,175.0 C440.5,177.1 442.8,178.0 443.6,178.6 C444.7,178.0 447.3,176.1 449.9,175.0 C452.4,173.9 455.9,172.2 458.9,172.0 C461.9,171.8 464.8,172.8 467.8,174.0 C470.8,175.2 473.8,177.7 476.8,179.5 C479.8,181.3 483.1,183.7 485.8,184.9 C488.5,186.1 491.8,186.4 493.0,186.7 C494.0,185.6 497.4,183.2 499.0,180.0 C500.6,176.8 502.3,172.2 502.8,167.8 C503.3,163.4 502.7,157.5 502.0,153.5 C501.3,149.5 499.8,146.0 498.4,143.6 C497.0,141.2 494.6,139.8 493.9,139.0 C492.8,139.3 489.6,141.2 487.6,141.0 C485.7,140.8 483.4,139.5 482.2,138.0 C481.0,136.5 480.3,134.5 480.4,132.0 C480.5,129.5 481.2,125.4 483.0,123.0 C484.8,120.6 488.2,118.6 491.0,117.6 C493.8,116.5 497.0,116.1 500.0,116.7 C503.0,117.3 506.3,118.5 509.0,121.0 C511.7,123.5 514.0,127.8 516.0,132.0 C518.0,136.2 519.7,140.7 520.8,146.0 C521.9,151.3 522.5,158.3 522.6,164.0 C522.8,169.7 522.1,174.9 521.7,180.0 C521.3,185.1 520.5,191.4 520.0,194.8 C519.5,198.2 518.5,197.2 519.0,200.6 C519.5,204.0 520.7,210.7 523.0,215.0 C525.3,219.3 529.2,223.6 533.0,226.4 C536.8,229.2 543.8,231.1 546.0,232.0 C547.2,228.7 549.4,218.7 553.0,212.0 C556.6,205.3 562.4,197.7 567.7,192.0 C573.0,186.3 581.0,182.4 585.0,177.6 C589.0,172.8 589.2,168.0 592.0,163.0 C594.8,158.0 597.4,151.3 602.0,147.4 C606.6,143.5 613.6,140.4 619.4,139.7 C625.2,139.0 631.7,140.3 636.7,143.0 C641.7,145.7 646.2,150.7 649.6,156.0 C653.0,161.3 655.4,168.2 656.8,174.7 C658.2,181.2 658.5,188.1 658.0,194.8 C657.5,201.5 656.8,207.6 654.0,215.0 C651.2,222.4 645.8,231.0 641.0,239.0 C636.2,247.0 630.5,254.7 625.0,263.0 C619.5,271.3 613.7,281.8 608.0,289.0 C602.3,296.2 597.4,301.2 590.7,306.0 C584.0,310.8 574.0,312.3 567.7,317.6 C561.4,322.9 557.1,330.5 553.0,337.7 C548.9,344.9 545.3,353.0 543.0,360.7 C540.7,368.4 539.9,377.1 539.0,383.7 C538.1,390.2 537.8,393.9 537.5,400.0 C537.2,406.1 536.6,413.3 537.0,420.0 C537.4,426.7 536.2,431.7 540.0,440.0 C543.8,448.3 551.7,464.0 560.0,470.0 C568.3,476.0 583.3,474.2 590.0,476.0 C596.7,477.8 598.1,479.0 600.0,481.0 C601.9,483.0 602.2,485.8 601.5,488.0 C600.8,490.2 598.8,492.9 596.0,494.5 C593.2,496.1 591.7,496.1 585.0,497.8 C578.3,499.6 568.0,502.4 556.0,505.0 C544.0,507.6 527.3,510.9 513.0,513.6 C498.7,516.3 484.2,518.6 470.0,521.0 C455.8,523.4 438.8,526.8 428.0,528.0 C417.2,529.2 412.2,528.2 405.0,528.0 C397.8,527.8 392.2,527.8 385.0,527.0 C377.8,526.2 369.0,524.9 362.0,523.5 C355.0,522.1 347.3,520.9 343.0,518.5 C338.7,516.1 336.3,512.4 336.0,509.0 C335.7,505.6 340.2,499.8 341.0,498.0 C338.7,496.8 331.3,494.0 327.4,490.6 C323.4,487.2 319.7,483.2 317.3,477.7 C314.9,472.2 313.0,464.8 313.0,457.6 C313.0,450.4 316.6,438.4 317.3,434.6 C315.6,432.7 309.6,428.3 307.0,423.0 C304.4,417.7 301.8,408.8 301.5,403.0 C301.2,397.2 303.2,392.3 305.0,388.0 C306.8,383.7 310.8,378.8 312.0,377.0 C310.4,374.5 304.4,368.8 302.6,362.0 C300.9,355.2 300.9,343.6 301.5,336.0 C302.1,328.4 303.8,322.5 306.0,316.6 C308.2,310.7 313.1,303.2 314.5,300.5 C313.9,299.4 313.2,297.4 311.0,294.0 C308.8,290.6 304.2,285.2 301.0,280.0 C297.8,274.8 294.3,268.2 291.5,263.0 C288.7,257.8 285.8,257.0 284.4,249.0Z" fill="none" stroke="#000" stroke-width="9" stroke-linejoin="round"/>
</g>
<clipPath id="sclip"><path d="M537.4,408.8 C539.5,404.7 544.9,402.5 549.6,400.9 C554.3,399.2 560.2,398.6 565.5,398.9 C570.8,399.2 576.5,400.7 581.3,402.8 C586.0,404.9 590.6,407.9 594.0,411.7 C597.4,415.5 600.1,421.0 601.4,425.6 C602.7,430.2 602.7,435.1 602.0,439.4 C601.3,443.7 598.5,448.5 597.0,451.3 C595.5,454.1 593.7,455.2 593.0,456.0 C594.3,456.3 599.3,456.7 601.0,458.0 C602.7,459.3 603.7,461.5 603.4,464.0 C603.1,466.5 601.7,470.7 599.0,473.0 C596.3,475.3 591.6,477.2 587.0,478.0 C582.4,478.8 576.0,478.8 571.4,478.0 C566.8,477.2 563.1,475.2 559.5,473.0 C555.9,470.8 552.7,468.0 549.6,465.0 C546.5,462.0 542.9,458.9 540.8,455.0 C538.7,451.1 537.5,446.3 536.8,441.4 C536.1,436.5 536.7,431.0 536.8,425.6 C536.9,420.2 535.3,412.9 537.4,408.8Z"/></clipPath>
<path d="M537.4,408.8 C539.5,404.7 544.9,402.5 549.6,400.9 C554.3,399.2 560.2,398.6 565.5,398.9 C570.8,399.2 576.5,400.7 581.3,402.8 C586.0,404.9 590.6,407.9 594.0,411.7 C597.4,415.5 600.1,421.0 601.4,425.6 C602.7,430.2 602.7,435.1 602.0,439.4 C601.3,443.7 598.5,448.5 597.0,451.3 C595.5,454.1 593.7,455.2 593.0,456.0 C594.3,456.3 599.3,456.7 601.0,458.0 C602.7,459.3 603.7,461.5 603.4,464.0 C603.1,466.5 601.7,470.7 599.0,473.0 C596.3,475.3 591.6,477.2 587.0,478.0 C582.4,478.8 576.0,478.8 571.4,478.0 C566.8,477.2 563.1,475.2 559.5,473.0 C555.9,470.8 552.7,468.0 549.6,465.0 C546.5,462.0 542.9,458.9 540.8,455.0 C538.7,451.1 537.5,446.3 536.8,441.4 C536.1,436.5 536.7,431.0 536.8,425.6 C536.9,420.2 535.3,412.9 537.4,408.8Z" fill="none" stroke="#7a1515" stroke-width="2"/>
<g clip-path="url(#sclip)">
<path d="M537.4,408.8 C539.5,404.7 544.9,402.5 549.6,400.9 C554.3,399.2 560.2,398.6 565.5,398.9 C570.8,399.2 576.5,400.7 581.3,402.8 C586.0,404.9 590.6,407.9 594.0,411.7 C597.4,415.5 600.1,421.0 601.4,425.6 C602.7,430.2 602.7,435.1 602.0,439.4 C601.3,443.7 598.5,448.5 597.0,451.3 C595.5,454.1 593.7,455.2 593.0,456.0 C594.3,456.3 599.3,456.7 601.0,458.0 C602.7,459.3 603.7,461.5 603.4,464.0 C603.1,466.5 601.7,470.7 599.0,473.0 C596.3,475.3 591.6,477.2 587.0,478.0 C582.4,478.8 576.0,478.8 571.4,478.0 C566.8,477.2 563.1,475.2 559.5,473.0 C555.9,470.8 552.7,468.0 549.6,465.0 C546.5,462.0 542.9,458.9 540.8,455.0 C538.7,451.1 537.5,446.3 536.8,441.4 C536.1,436.5 536.7,431.0 536.8,425.6 C536.9,420.2 535.3,412.9 537.4,408.8Z" fill="#6a2290" opacity="1"/>
<path d="M537.4,408.8 C539.5,404.7 544.9,402.5 549.6,400.9 C554.3,399.2 560.2,398.6 565.5,398.9 C570.8,399.2 576.5,400.7 581.3,402.8 C586.0,404.9 590.6,407.9 594.0,411.7 C597.4,415.5 600.1,421.0 601.4,425.6 C602.7,430.2 602.7,435.1 602.0,439.4 C601.3,443.7 598.5,448.5 597.0,451.3 C595.5,454.1 593.7,455.2 593.0,456.0 C594.3,456.3 599.3,456.7 601.0,458.0 C602.7,459.3 603.7,461.5 603.4,464.0 C603.1,466.5 601.7,470.7 599.0,473.0 C596.3,475.3 591.6,477.2 587.0,478.0 C582.4,478.8 576.0,478.8 571.4,478.0 C566.8,477.2 563.1,475.2 559.5,473.0 C555.9,470.8 552.7,468.0 549.6,465.0 C546.5,462.0 542.9,458.9 540.8,455.0 C538.7,451.1 537.5,446.3 536.8,441.4 C536.1,436.5 536.7,431.0 536.8,425.6 C536.9,420.2 535.3,412.9 537.4,408.8Z" fill="none" stroke="#2e0c44" stroke-width="14" stroke-linecap="round" stroke-linejoin="round" filter="url(#b3)" opacity="0.85"/>
<ellipse cx="552.0" cy="410.0" rx="11.0" ry="6.0" transform="rotate(-25.0 552.0 410.0)" fill="#2fc41e" filter="url(#b2)" opacity="1"/>
<ellipse cx="546.0" cy="418.0" rx="5.0" ry="6.0" transform="rotate(0.0 546.0 418.0)" fill="#38b030" filter="url(#b2)" opacity="0.9"/>
<ellipse cx="544.0" cy="426.0" rx="5.0" ry="10.0" transform="rotate(0.0 544.0 426.0)" fill="#4a8a70" filter="url(#b2)" opacity="0.85"/>
<ellipse cx="562.0" cy="440.0" rx="9.0" ry="6.0" transform="rotate(25.0 562.0 440.0)" fill="#f07c78" filter="url(#b2)" opacity="1"/>
<ellipse cx="565.0" cy="445.0" rx="5.0" ry="3.5" transform="rotate(0.0 565.0 445.0)" fill="#f0d040" filter="url(#b2)" opacity="0.95"/>
<ellipse cx="556.0" cy="432.0" rx="4.0" ry="5.0" transform="rotate(0.0 556.0 432.0)" fill="#c060d0" filter="url(#b2)" opacity="0.8"/>
<ellipse cx="575.0" cy="447.0" rx="7.0" ry="4.0" transform="rotate(0.0 575.0 447.0)" fill="#5a50c0" filter="url(#b2)" opacity="0.7"/>
<ellipse cx="586.0" cy="414.0" rx="8.0" ry="7.0" transform="rotate(0.0 586.0 414.0)" fill="#9a44c0" filter="url(#b3)" opacity="0.8"/>
<ellipse cx="560.0" cy="420.0" rx="6.0" ry="4.0" transform="rotate(-20.0 560.0 420.0)" fill="#b050c8" filter="url(#b2)" opacity="0.7"/>
<ellipse cx="566.0" cy="466.0" rx="6.0" ry="3.5" transform="rotate(10.0 566.0 466.0)" fill="#e0b040" filter="url(#b2)" opacity="0.9"/>
<ellipse cx="585.0" cy="468.0" rx="10.0" ry="5.0" transform="rotate(-10.0 585.0 468.0)" fill="#8a38b0" filter="url(#b2)" opacity="0.8"/>
<ellipse cx="597.0" cy="440.0" rx="4.0" ry="16.0" transform="rotate(0.0 597.0 440.0)" fill="#3a1050" filter="url(#b2)" opacity="0.8"/>
<ellipse cx="545.0" cy="455.0" rx="4.0" ry="12.0" transform="rotate(-30.0 545.0 455.0)" fill="#3a1050" filter="url(#b2)" opacity="0.8"/>
<ellipse cx="575.0" cy="476.0" rx="20.0" ry="3.0" transform="rotate(0.0 575.0 476.0)" fill="#2a0a3a" filter="url(#b2)" opacity="0.8"/>
<path d="M593.0,456.0 C590.7,456.2 583.9,457.2 579.0,457.0 C574.1,456.8 567.9,456.7 563.5,455.0 C559.1,453.3 554.9,450.0 552.6,447.0 C550.3,444.0 549.3,440.1 549.6,437.0 C549.9,433.9 552.1,430.4 554.6,428.5 C557.1,426.6 561.5,425.4 564.5,425.6 C567.5,425.8 571.0,427.7 572.4,429.5 C573.8,431.3 573.8,434.9 573.0,436.4 C572.2,437.9 568.7,438.7 567.4,438.4 C566.1,438.1 565.4,435.1 565.0,434.5" fill="none" stroke="#000" stroke-width="3.6" stroke-linecap="round" stroke-linejoin="round" opacity="1"/>
<path d="M552.0,406.0 C552.7,406.5 555.0,407.7 556.0,409.0 C557.0,410.3 557.7,413.2 558.0,414.0" fill="none" stroke="#000" stroke-width="0.9" stroke-linecap="round" stroke-linejoin="round" opacity="1"/>
<path d="M562.0,404.0 C562.7,404.7 565.2,406.3 566.0,408.0 C566.8,409.7 566.8,413.0 567.0,414.0" fill="none" stroke="#000" stroke-width="0.9" stroke-linecap="round" stroke-linejoin="round" opacity="1"/>
<path d="M572.0,406.0 C572.5,407.0 574.8,410.0 575.0,412.0 C575.2,414.0 573.3,417.0 573.0,418.0" fill="none" stroke="#000" stroke-width="0.9" stroke-linecap="round" stroke-linejoin="round" opacity="1"/>
<path d="M546.0,412.0 C546.7,412.2 549.3,412.8 550.0,413.0" fill="none" stroke="#000" stroke-width="0.9" stroke-linecap="round" stroke-linejoin="round" opacity="1"/>
<path transform="translate(588 436) rotate(-22) scale(0.86)" d="M0,7 C-9,1 -10,-6 -5,-8 C-2,-9 0,-7 0,-4 C0,-7 2,-10 6,-9 C11,-7 9,1 0,7Z" fill="#e22814"/>
<path d="M537.4,408.8 C539.5,404.7 544.9,402.5 549.6,400.9 C554.3,399.2 560.2,398.6 565.5,398.9 C570.8,399.2 576.5,400.7 581.3,402.8 C586.0,404.9 590.6,407.9 594.0,411.7 C597.4,415.5 600.1,421.0 601.4,425.6 C602.7,430.2 602.7,435.1 602.0,439.4 C601.3,443.7 598.5,448.5 597.0,451.3 C595.5,454.1 593.7,455.2 593.0,456.0 C594.3,456.3 599.3,456.7 601.0,458.0 C602.7,459.3 603.7,461.5 603.4,464.0 C603.1,466.5 601.7,470.7 599.0,473.0 C596.3,475.3 591.6,477.2 587.0,478.0 C582.4,478.8 576.0,478.8 571.4,478.0 C566.8,477.2 563.1,475.2 559.5,473.0 C555.9,470.8 552.7,468.0 549.6,465.0 C546.5,462.0 542.9,458.9 540.8,455.0 C538.7,451.1 537.5,446.3 536.8,441.4 C536.1,436.5 536.7,431.0 536.8,425.6 C536.9,420.2 535.3,412.9 537.4,408.8Z" fill="none" stroke="#000" stroke-width="8.6" stroke-linecap="round" stroke-linejoin="round" opacity="1"/>
</g>
<path d="M514.0,518.4 C517.7,518.1 529.0,517.1 536.0,516.5 C543.0,515.9 546.1,515.7 555.7,514.6 C565.3,513.5 584.0,511.3 593.5,509.7 C603.0,508.1 603.0,506.1 612.4,504.8 C621.8,503.5 639.3,503.4 650.0,502.0 C660.7,500.6 669.2,498.7 676.7,496.5 C684.2,494.3 692.0,490.2 695.0,489.0" fill="none" stroke="#46304e" stroke-width="1.0" stroke-linecap="round" stroke-linejoin="round" opacity="1"/>
<path d="M499.0,534.0 C503.4,533.4 517.9,532.7 525.4,530.5 C532.9,528.3 535.2,523.2 544.0,521.0 C552.8,518.8 567.9,518.7 578.0,517.0 C588.1,515.3 594.7,512.4 604.9,510.9 C615.1,509.4 628.3,508.9 639.0,507.8 C649.7,506.7 659.7,505.6 669.0,504.0 C678.3,502.4 690.7,499.3 695.0,498.4" fill="none" stroke="#46304e" stroke-width="1.0" stroke-linecap="round" stroke-linejoin="round" opacity="1"/>
<path d="M556.0,519.0 C562.2,519.0 581.0,518.7 593.5,519.0 C606.0,519.3 619.6,521.0 631.0,521.0 C642.4,521.0 652.8,520.2 661.6,519.0 C670.4,517.8 678.4,515.4 684.0,513.5 C689.6,511.6 693.2,508.8 695.0,507.8" fill="none" stroke="#46304e" stroke-width="1.0" stroke-linecap="round" stroke-linejoin="round" opacity="1"/>
<path d="M520.0,525.0 C524.7,524.5 538.0,523.8 548.0,522.0 C558.0,520.2 569.7,516.3 580.0,514.0 C590.3,511.7 605.0,509.0 610.0,508.0" fill="none" stroke="#46304e" stroke-width="0.8" stroke-linecap="round" stroke-linejoin="round" opacity="1"/>
<text x="0" y="0" font-family="'Liberation Serif',serif" font-style="italic" font-size="13" fill="#46304e" transform="translate(543 542) rotate(-3) skewX(-20)" textLength="118" lengthAdjust="spacingAndGlyphs">Mali-heart-date</text>
<path d="M673.0,540.0 C673.7,540.0 676.3,540.0 677.0,540.0" fill="none" stroke="#1a1020" stroke-width="1.6" stroke-linecap="round" stroke-linejoin="round" opacity="1"/>
<path d="M680.0,540.0 C680.7,539.9 683.3,539.7 684.0,539.6" fill="none" stroke="#1a1020" stroke-width="1.6" stroke-linecap="round" stroke-linejoin="round" opacity="1"/>
</g>
</svg>
</body></html>
